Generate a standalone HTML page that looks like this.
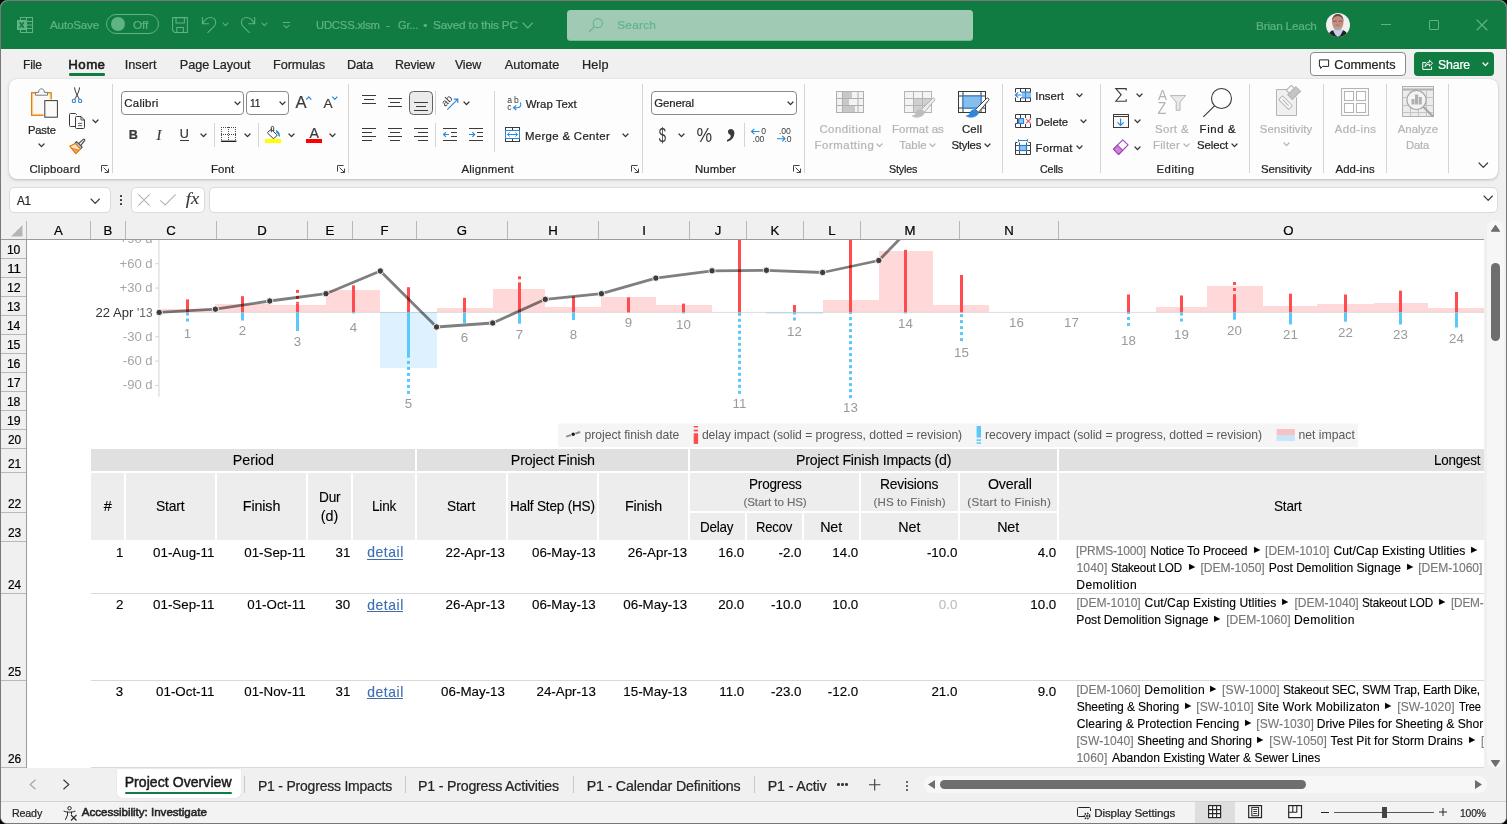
<!DOCTYPE html>
<html lang="en"><head><meta charset="utf-8"><title>UDCSS.xlsm - Excel</title>
<style>
*{box-sizing:border-box;margin:0;padding:0}
html,body{width:1507px;height:824px;overflow:hidden;background:#f0f0f0}
body{position:relative;font-family:"Liberation Sans",sans-serif;font-size:12px;color:#242424}
#app{position:absolute;left:0;top:0;width:1507px;height:824px;will-change:transform}
.t{position:absolute;white-space:nowrap;-webkit-text-stroke:0.22px currentColor}
.tb .t{-webkit-text-stroke:0.12px currentColor}
.a{position:absolute}
svg{position:absolute;overflow:visible}
.sep{position:absolute;width:1px;background:#d4d4d4}
.hc{position:absolute;background:#ededed}
</style></head>
<body>
<div id="app">
<div class="a" style="left:0;top:0;width:1507px;height:824px;background:#060606"></div>
<div class="a" style="left:0;top:0;width:1507px;height:824px;background:#f0f0f0;border-radius:7px;border:1px solid #7c787a;"></div>
<div class="a" style="left:1px;top:1px;width:1505px;height:47.5px;background:#107c41;border-radius:6px 6px 0 0"></div>
<svg style="left:17.00px;top:17.00px" width="16" height="16"><rect x="3.5" y="0.5" width="12" height="15" fill="none" stroke="#5fb384" stroke-width="1"/><path d="M9.5 0.5V15.5M9.5 4.5H15.5M9.5 8H15.5M9.5 11.5H15.5M3.5 3.5H9.5M3.5 12.5H9.5" stroke="#5fb384" stroke-width="1" fill="none"/><rect x="0" y="3" width="9.3" height="10" fill="#5fb384"/><path d="M2.6 5.3L6.8 10.7M6.8 5.3L2.6 10.7" stroke="#107c41" stroke-width="1.5" fill="none"/></svg>
<div class="t" style="left:49.70px;top:15.20px;height:20px;line-height:20px;font-size:11.8px;color:#5fb384;letter-spacing:-0.2px;transform:scaleX(0.9894);transform-origin:0 50%;">AutoSave</div>
<div class="a" style="left:106px;top:14.4px;width:53px;height:19.6px;border:1px solid #5fb384;border-radius:10px"></div>
<div class="a" style="left:111px;top:17.2px;width:14px;height:14px;border-radius:7px;background:#5fb384"></div>
<div class="t" style="left:132.97px;top:15.20px;height:20px;line-height:20px;font-size:11.8px;color:#5fb384;letter-spacing:-0.072px;">Off</div>
<svg style="left:171px;top:16px" width="18" height="18" viewBox="171 16 18 18"><path d="M172.6 17.6H187.4V32.4H174.6L172.6 30.4Z" fill="none" stroke="#5fb384" stroke-width="1.05" stroke-linejoin="round"/><path d="M176 17.6V23H184.4V17.6M176.8 32.4V27.4H183.4V32.4" fill="none" stroke="#5fb384" stroke-width="1.05"/></svg>
<svg style="left:200px;top:15px" width="18" height="20" viewBox="200 15 18 20"><path d="M202.4 17.1V23.7H208.9M202.8 23.3C204.6 19.6 207.6 17.4 210.6 17.4C213.6 17.4 215.7 19.6 215.7 22.6C215.7 24.5 214.8 25.8 213.4 27.2L207.5 32.9" fill="none" stroke="#5fb384" stroke-width="1.05" stroke-linejoin="miter"/></svg>
<svg style="left:223.00px;top:23.05px" width="5" height="2.7"><path d="M0 0L2.5 2.7L5 0" fill="none" stroke="#5fb384" stroke-width="1.1" stroke-linecap="round" stroke-linejoin="round"/></svg>
<svg style="left:239px;top:15px" width="18" height="20" viewBox="239 15 18 20"><path d="M254.7 17.1V23.7H248.2M254.3 23.3C252.5 19.6 249.5 17.4 246.5 17.4C243.5 17.4 241.4 19.6 241.4 22.6C241.4 24.5 242.3 25.8 243.7 27.2L249.6 32.9" fill="none" stroke="#5fb384" stroke-width="1.05" stroke-linejoin="miter"/></svg>
<svg style="left:262.00px;top:23.05px" width="5" height="2.7"><path d="M0 0L2.5 2.7L5 0" fill="none" stroke="#5fb384" stroke-width="1.1" stroke-linecap="round" stroke-linejoin="round"/></svg>
<svg style="left:281px;top:20px" width="11" height="10" viewBox="281 20 11 10"><path d="M283 22.4H290M283.6 25.2L286.5 27.7L289.4 25.2" fill="none" stroke="#5fb384" stroke-width="1.05"/></svg>
<div class="t" style="left:316.06px;top:15.20px;height:20px;line-height:20px;font-size:11.8px;color:#5fb384;letter-spacing:-0.2px;transform:scaleX(0.9541);transform-origin:0 50%;">UDCSS.xlsm</div>
<div class="t" style="left:386.02px;top:15.20px;height:20px;line-height:20px;font-size:11.8px;color:#5fb384;">-</div>
<div class="t" style="left:397.54px;top:15.20px;height:20px;line-height:20px;font-size:11.8px;color:#5fb384;letter-spacing:-0.2px;transform:scaleX(0.9449);transform-origin:0 50%;">Gr...</div>
<div class="t" style="left:423.19px;top:15.40px;height:20px;line-height:20px;font-size:11.8px;color:#5fb384;">•</div>
<div class="t" style="left:432.97px;top:15.20px;height:20px;line-height:20px;font-size:11.8px;color:#5fb384;letter-spacing:-0.187px;">Saved to this PC</div>
<svg style="left:522.95px;top:23.00px" width="9.5" height="5"><path d="M0 0L4.75 5L9.5 0" fill="none" stroke="#5fb384" stroke-width="1.1" stroke-linecap="round" stroke-linejoin="round"/></svg>
<div class="a" style="left:567.2px;top:9.5px;width:405.8px;height:31.3px;background:#a0cab4;border-radius:3.5px;border-bottom:1px solid #6fbd93"></div>
<svg style="left:588.70px;top:18.00px" width="14" height="14"><circle cx="8.8" cy="5.2" r="4.6" fill="none" stroke="#62b487" stroke-width="1.1"/><path d="M5.5 8.5L0.5 13.5" stroke="#62b487" stroke-width="1.1" stroke-linecap="round"/></svg>
<div class="t" style="left:617.17px;top:15.20px;height:20px;line-height:20px;font-size:11.8px;color:#62b487;letter-spacing:0.270px;">Search</div>
<div class="t" style="left:1255.96px;top:15.60px;height:20px;line-height:20px;font-size:11.8px;color:#5fb384;letter-spacing:-0.2px;transform:scaleX(0.9993);transform-origin:0 50%;">Brian Leach</div>
<svg style="left:1326.20px;top:13.00px" width="24" height="24"><defs><clipPath id="avc"><circle cx="12" cy="12" r="12"/></clipPath></defs><g clip-path="url(#avc)"><rect width="24" height="24" fill="#f1eff0"/><path d="M2 24C2.5 19.5 5 17.6 8 17L12 19L16 17C19 17.6 21.5 19.5 22 24Z" fill="#222226"/><path d="M7 17.4L9.2 15.5H14.8L17 17.4L14.6 22L12 24L9.4 22Z" fill="#c3d0ea"/><ellipse cx="11.8" cy="9.2" rx="5.7" ry="8" fill="#c58e7c"/><path d="M6.1 8.6C5.8 3.6 8.6 1 11.8 1S17.8 3.6 17.5 8.6C16.8 5 15 2.9 11.8 2.9S6.8 5 6.1 8.6Z" fill="#6e4a40"/><path d="M6.8 8.2H10.8M12.8 8.2H16.8" stroke="#8a6f70" stroke-width="1.5"/><path d="M10 11.8Q11.8 12.8 13.6 11.8" stroke="#b0706a" stroke-width="0.9" fill="none"/><path d="M7 12.2Q8 14.2 11.8 14.4Q15.6 14.2 16.6 12.2Q16.6 16.6 11.8 17.3Q7 16.6 7 12.2Z" fill="#b3a59d"/></g></svg>
<div class="a" style="left:1381px;top:23.9px;width:10px;height:1px;background:#5fb384"></div>
<div class="a" style="left:1429px;top:20px;width:10px;height:10px;border:1px solid #5fb384;border-radius:1px"></div>
<svg style="left:1477.00px;top:20.00px" width="10" height="10"><path d="M0 0L10 10M10 0L0 10" stroke="#5fb384" stroke-width="1.15" stroke-linecap="round" fill="none"/></svg>
<div class="t" style="left:22.73px;top:54.60px;height:20px;line-height:20px;font-size:12.7px;color:#242424;letter-spacing:-0.2px;transform:scaleX(0.9584);transform-origin:0 50%;">File</div>
<div class="t" style="left:124.66px;top:54.60px;height:20px;line-height:20px;font-size:12.7px;color:#242424;letter-spacing:0.051px;">Insert</div>
<div class="t" style="left:179.78px;top:54.60px;height:20px;line-height:20px;font-size:12.7px;color:#242424;letter-spacing:-0.043px;">Page Layout</div>
<div class="t" style="left:273.08px;top:54.60px;height:20px;line-height:20px;font-size:12.7px;color:#242424;letter-spacing:-0.114px;">Formulas</div>
<div class="t" style="left:346.88px;top:54.60px;height:20px;line-height:20px;font-size:12.7px;color:#242424;letter-spacing:-0.160px;">Data</div>
<div class="t" style="left:394.81px;top:54.60px;height:20px;line-height:20px;font-size:12.7px;color:#242424;letter-spacing:-0.2px;transform:scaleX(0.9788);transform-origin:0 50%;">Review</div>
<div class="t" style="left:455.44px;top:54.60px;height:20px;line-height:20px;font-size:12.7px;color:#242424;letter-spacing:-0.2px;transform:scaleX(0.9797);transform-origin:0 50%;">View</div>
<div class="t" style="left:504.70px;top:54.60px;height:20px;line-height:20px;font-size:12.7px;color:#242424;letter-spacing:0.045px;">Automate</div>
<div class="t" style="left:581.88px;top:54.60px;height:20px;line-height:20px;font-size:12.7px;color:#242424;letter-spacing:0.175px;">Help</div>
<div class="t" style="left:68.34px;top:54.60px;height:20px;line-height:20px;font-size:13.3px;color:#1b1b1b;letter-spacing:0.406px;-webkit-text-stroke:0.6px #1b1b1b;">Home</div>
<div class="a" style="left:68.6px;top:73.4px;width:36.6px;height:2.4px;background:#107c41;border-radius:1.2px"></div>
<div class="a" style="left:1310.3px;top:52px;width:95.3px;height:24px;background:#fff;border:1px solid #8a8a8a;border-radius:4px"></div>
<svg style="left:1317px;top:58px" width="14" height="12" viewBox="1317 58 14 12"><path d="M1319.4 59.9H1328.6V66.4H1322.6L1320.6 68.5V66.4H1319.4Z" fill="none" stroke="#242424" stroke-width="1" stroke-linejoin="round"/></svg>
<div class="t" style="left:1334.37px;top:55.00px;height:20px;line-height:20px;font-size:12.7px;color:#242424;letter-spacing:-0.032px;">Comments</div>
<div class="a" style="left:1414px;top:52px;width:80px;height:24px;background:#107c41;border-radius:4px"></div>
<svg style="left:1421px;top:57px" width="14" height="14" viewBox="1421 57 14 14"><path d="M1426 62.6H1422.8V69.4H1431.6V66.6" fill="none" stroke="#fff" stroke-width="1"/><path d="M1425 66.6C1425.4 63.6 1427.2 62.2 1429.4 62.2V60.2L1432.6 63.2L1429.4 66.2V64.2C1427.6 64.2 1426.2 64.8 1425 66.6Z" fill="none" stroke="#fff" stroke-width="0.95" stroke-linejoin="round"/></svg>
<div class="t" style="left:1438.34px;top:55.00px;height:20px;line-height:20px;font-size:12.7px;color:#fff;letter-spacing:-0.2px;transform:scaleX(0.9748);transform-origin:0 50%;">Share</div>
<svg style="left:1482.90px;top:63.30px" width="4.8" height="2.6"><path d="M0 0L2.4 2.6L4.8 0" fill="none" stroke="#fff" stroke-width="1.3" stroke-linecap="round" stroke-linejoin="round"/></svg>
<div class="a" style="left:9px;top:79px;width:1489px;height:100px;background:#fdfdfd;border-radius:8px;box-shadow:0 1px 3px rgba(0,0,0,0.22), 0 0 1px rgba(0,0,0,0.12)"></div>
<div class="sep" style="left:112.00px;top:84px;height:89px"></div>
<div class="sep" style="left:348.20px;top:84px;height:89px"></div>
<div class="sep" style="left:642.00px;top:84px;height:89px"></div>
<div class="sep" style="left:804.10px;top:84px;height:89px"></div>
<div class="sep" style="left:1002.10px;top:84px;height:89px"></div>
<div class="sep" style="left:1099.90px;top:84px;height:89px"></div>
<div class="sep" style="left:1249.00px;top:84px;height:89px"></div>
<div class="sep" style="left:1323.00px;top:84px;height:89px"></div>
<div class="sep" style="left:1386.00px;top:84px;height:89px"></div>
<div class="sep" style="left:1448.00px;top:84px;height:89px"></div>
<div class="t" style="left:29.43px;top:159.30px;height:20px;line-height:20px;font-size:11.4px;color:#242424;letter-spacing:0.227px;">Clipboard</div>
<div class="t" style="left:210.89px;top:159.30px;height:20px;line-height:20px;font-size:11.4px;color:#242424;letter-spacing:0.156px;">Font</div>
<div class="t" style="left:461.50px;top:159.30px;height:20px;line-height:20px;font-size:11.4px;color:#242424;letter-spacing:0.186px;">Alignment</div>
<div class="t" style="left:695.09px;top:159.30px;height:20px;line-height:20px;font-size:11.4px;color:#242424;letter-spacing:0.031px;">Number</div>
<div class="t" style="left:889.02px;top:159.30px;height:20px;line-height:20px;font-size:11.4px;color:#242424;letter-spacing:-0.2px;transform:scaleX(0.9433);transform-origin:0 50%;">Styles</div>
<div class="t" style="left:1040.36px;top:159.30px;height:20px;line-height:20px;font-size:11.4px;color:#242424;letter-spacing:-0.2px;transform:scaleX(0.9451);transform-origin:0 50%;">Cells</div>
<div class="t" style="left:1156.59px;top:159.30px;height:20px;line-height:20px;font-size:11.4px;color:#242424;letter-spacing:0.438px;">Editing</div>
<div class="t" style="left:1260.99px;top:159.30px;height:20px;line-height:20px;font-size:11.4px;color:#242424;letter-spacing:-0.049px;">Sensitivity</div>
<div class="t" style="left:1335.50px;top:159.30px;height:20px;line-height:20px;font-size:11.4px;color:#242424;letter-spacing:0.075px;">Add-ins</div>
<svg style="left:100.80px;top:164.90px" width="8" height="8"><path d="M0.5 6.6V0.5H6.6M2.6 2.6L7.5 7.5M3.6 7.5H7.5V3.6" fill="none" stroke="#444" stroke-width="1"/></svg>
<svg style="left:337.00px;top:164.90px" width="8" height="8"><path d="M0.5 6.6V0.5H6.6M2.6 2.6L7.5 7.5M3.6 7.5H7.5V3.6" fill="none" stroke="#444" stroke-width="1"/></svg>
<svg style="left:631.00px;top:164.90px" width="8" height="8"><path d="M0.5 6.6V0.5H6.6M2.6 2.6L7.5 7.5M3.6 7.5H7.5V3.6" fill="none" stroke="#444" stroke-width="1"/></svg>
<svg style="left:792.80px;top:164.90px" width="8" height="8"><path d="M0.5 6.6V0.5H6.6M2.6 2.6L7.5 7.5M3.6 7.5H7.5V3.6" fill="none" stroke="#444" stroke-width="1"/></svg>
<svg style="left:28px;top:86px" width="32" height="34" viewBox="28 86 32 34"><rect x="31.6" y="92.7" width="19.6" height="22.6" fill="#fbe3a8" stroke="#e27a0e" stroke-width="1.2"/><rect x="33.4" y="94.4" width="16" height="19.2" fill="#f9f9f9"/><path d="M35.5 95.2V92.4H38.6C38.6 89.8 40 88.8 41.5 88.8C43 88.8 44.4 89.8 44.4 92.4H47.5V95.2Z" fill="#f9f9f9" stroke="#7a7a7a" stroke-width="1" stroke-linejoin="round"/><rect x="43.6" y="99.4" width="15" height="19" fill="#fdfdfd"/><rect x="44.8" y="100.6" width="12.6" height="16.6" fill="#fafafa" stroke="#3a3a3a" stroke-width="1"/></svg>
<div class="t" style="left:28.30px;top:120.20px;height:20px;line-height:20px;font-size:11.4px;color:#242424;letter-spacing:-0.2px;transform:scaleX(0.9851);transform-origin:0 50%;">Paste</div>
<svg style="left:38.90px;top:143.85px" width="5" height="2.7"><path d="M0 0L2.5 2.7L5 0" fill="none" stroke="#333" stroke-width="1.25" stroke-linecap="round" stroke-linejoin="round"/></svg>
<svg style="left:70px;top:86px" width="14" height="18" viewBox="70 86 14 18"><path d="M74.5 87.4C75 91 76.5 94.5 79.3 99.2M79.6 87.4C79.1 91 77.6 94.5 74.8 99.2" stroke="#3a3a3a" stroke-width="1" fill="none"/><circle cx="73.9" cy="100.9" r="1.65" fill="none" stroke="#2b88d8" stroke-width="1.1"/><circle cx="80.1" cy="100.9" r="1.65" fill="none" stroke="#2b88d8" stroke-width="1.1"/></svg>
<svg style="left:68px;top:112px" width="18" height="18" viewBox="68 112 18 18"><path d="M75 126.5H70.5A1 1 0 0 1 69.5 125.5V114.5A1 1 0 0 1 70.5 113.5H75.5L76.8 114.8" fill="none" stroke="#3a3a3a" stroke-width="1"/><path d="M76.5 116.5H81L84.5 120V127.5A1 1 0 0 1 83.5 128.5H76.5A1 1 0 0 1 75.5 127.5V117.5A1 1 0 0 1 76.5 116.5Z" fill="#fafafa" stroke="#3a3a3a" stroke-width="1"/><path d="M81 116.5V120H84.5" fill="none" stroke="#3a3a3a" stroke-width="0.9"/><path d="M78 123.4H82.2M78 125.6H82.2" stroke="#3a3a3a" stroke-width="0.8"/></svg>
<svg style="left:93.00px;top:120.25px" width="5" height="2.7"><path d="M0 0L2.5 2.7L5 0" fill="none" stroke="#333" stroke-width="1.25" stroke-linecap="round" stroke-linejoin="round"/></svg>
<svg style="left:68px;top:138px" width="18" height="17" viewBox="68 138 18 17"><path d="M78.6 143.6L83.2 139.4A0.9 0.9 0 0 1 84.6 140.6L80.6 145.6" fill="#fafafa" stroke="#444" stroke-width="1.1"/><path d="M76.6 141.6L82.2 147.2L80.6 148.8L75 143.2Z" fill="#d8d8d8" stroke="#444" stroke-width="1.1" stroke-linejoin="round"/><path d="M75.2 143.4L80.6 148.8L75.8 153.6L69.8 146.2Z" fill="#fce6c4" stroke="#e2720f" stroke-width="1.1" stroke-linejoin="round"/><path d="M71.5 148.2L79.2 150.2L75.8 153.6Z" fill="#f3a04a" stroke="#e2720f" stroke-width="0.8" stroke-linejoin="round"/></svg>
<div class="a" style="left:121.3px;top:91px;width:122.4px;height:23.6px;background:#fff;border:1px solid #8a8a8a;border-radius:4px"></div>
<div class="t" style="left:124.23px;top:93.00px;height:20px;line-height:20px;font-size:11.4px;color:#242424;letter-spacing:0.308px;">Calibri</div>
<svg style="left:234.50px;top:102.15px" width="5" height="2.7"><path d="M0 0L2.5 2.7L5 0" fill="none" stroke="#333" stroke-width="1.25" stroke-linecap="round" stroke-linejoin="round"/></svg>
<div class="a" style="left:246.3px;top:91px;width:42.3px;height:23.6px;background:#fff;border:1px solid #8a8a8a;border-radius:4px"></div>
<div class="t" style="left:249.94px;top:93.00px;height:20px;line-height:20px;font-size:11.4px;color:#242424;letter-spacing:-0.2px;transform:scaleX(0.8895);transform-origin:0 50%;">11</div>
<svg style="left:279.50px;top:102.15px" width="5" height="2.7"><path d="M0 0L2.5 2.7L5 0" fill="none" stroke="#333" stroke-width="1.25" stroke-linecap="round" stroke-linejoin="round"/></svg>
<div class="t" style="left:295.58px;top:92.90px;height:20px;line-height:20px;font-size:16.6px;color:#3a3a3a;">A</div>
<svg style="left:305px;top:94px" width="8" height="8" viewBox="305 94 8 8"><path d="M306.3 99.6L308.8 96.8L311.3 99.6" fill="none" stroke="#2b88d8" stroke-width="1.2"/></svg>
<div class="t" style="left:323.58px;top:93.60px;height:20px;line-height:20px;font-size:13.6px;color:#3a3a3a;">A</div>
<svg style="left:331px;top:94px" width="8" height="8" viewBox="331 94 8 8"><path d="M332.3 96.6L334.8 99.4L337.3 96.6" fill="none" stroke="#2b88d8" stroke-width="1.2"/></svg>
<div class="t" style="left:128.64px;top:124.60px;height:20px;line-height:20px;font-size:12.6px;color:#3a3a3a;font-weight:bold;">B</div>
<div class="t" style="left:156.44px;top:124.60px;height:20px;line-height:20px;font-size:14.6px;color:#3a3a3a;font-style:italic;font-family:'Liberation Serif',serif;">I</div>
<div class="t" style="left:179.86px;top:123.80px;height:20px;line-height:20px;font-size:12.6px;color:#3a3a3a;">U</div>
<div class="a" style="left:180px;top:140.2px;width:9px;height:1px;background:#3a3a3a"></div>
<svg style="left:200.70px;top:133.95px" width="5" height="2.7"><path d="M0 0L2.5 2.7L5 0" fill="none" stroke="#333" stroke-width="1.25" stroke-linecap="round" stroke-linejoin="round"/></svg>
<div class="sep" style="left:213.8px;top:123px;height:24px"></div>
<svg style="left:221px;top:126px" width="16" height="17" viewBox="221 126 16 17"><g fill="#4a4a4a" shape-rendering="crispEdges"><rect x="221" y="127" width="1" height="1"/><rect x="221" y="134" width="1" height="1"/><rect x="223" y="127" width="1" height="1"/><rect x="223" y="134" width="1" height="1"/><rect x="225" y="127" width="1" height="1"/><rect x="225" y="134" width="1" height="1"/><rect x="227" y="127" width="1" height="1"/><rect x="227" y="134" width="1" height="1"/><rect x="229" y="127" width="1" height="1"/><rect x="229" y="134" width="1" height="1"/><rect x="231" y="127" width="1" height="1"/><rect x="231" y="134" width="1" height="1"/><rect x="233" y="127" width="1" height="1"/><rect x="233" y="134" width="1" height="1"/><rect x="235" y="127" width="1" height="1"/><rect x="235" y="134" width="1" height="1"/><rect x="221" y="127" width="1" height="1"/><rect x="228" y="127" width="1" height="1"/><rect x="235" y="127" width="1" height="1"/><rect x="221" y="129" width="1" height="1"/><rect x="228" y="129" width="1" height="1"/><rect x="235" y="129" width="1" height="1"/><rect x="221" y="131" width="1" height="1"/><rect x="228" y="131" width="1" height="1"/><rect x="235" y="131" width="1" height="1"/><rect x="221" y="133" width="1" height="1"/><rect x="228" y="133" width="1" height="1"/><rect x="235" y="133" width="1" height="1"/><rect x="221" y="135" width="1" height="1"/><rect x="228" y="135" width="1" height="1"/><rect x="235" y="135" width="1" height="1"/><rect x="221" y="137" width="1" height="1"/><rect x="228" y="137" width="1" height="1"/><rect x="235" y="137" width="1" height="1"/><rect x="221" y="139" width="1" height="1"/><rect x="228" y="139" width="1" height="1"/><rect x="235" y="139" width="1" height="1"/></g><rect x="221" y="140.6" width="15.4" height="1.4" fill="#222"/></svg>
<svg style="left:245.00px;top:133.95px" width="5" height="2.7"><path d="M0 0L2.5 2.7L5 0" fill="none" stroke="#333" stroke-width="1.25" stroke-linecap="round" stroke-linejoin="round"/></svg>
<div class="sep" style="left:258.2px;top:123px;height:24px"></div>
<svg style="left:266px;top:126px" width="15" height="13" viewBox="266 126 15 13"><path d="M271.2 129.3L276.6 134.6A1 1 0 0 1 276.6 136L274.2 138.1A1 1 0 0 1 272.8 138.1L267.9 133.4A1 1 0 0 1 267.9 132Z" fill="#fafafa" stroke="#3a3a3a" stroke-width="1" stroke-linejoin="round"/><path d="M271.3 132.2V127.6A1.2 1.2 0 0 1 273.7 127.6V131" fill="none" stroke="#3a3a3a" stroke-width="1"/><path d="M276.4 130.6C278.6 131.4 279.6 133.4 279.4 136.4C278.6 134.4 277.8 133.4 276.8 132.8Z" fill="#2b88d8" stroke="#2b88d8" stroke-width="0.9" stroke-linejoin="round"/></svg>
<div class="a" style="left:264.8px;top:139px;width:16px;height:3.8px;background:#ffff00"></div>
<svg style="left:288.80px;top:133.95px" width="5" height="2.7"><path d="M0 0L2.5 2.7L5 0" fill="none" stroke="#333" stroke-width="1.25" stroke-linecap="round" stroke-linejoin="round"/></svg>
<div class="t" style="left:309.53px;top:122.80px;height:20px;line-height:20px;font-size:14.2px;color:#3a3a3a;">A</div>
<div class="a" style="left:305.8px;top:139px;width:16.3px;height:3.8px;background:#ff0000"></div>
<svg style="left:329.80px;top:133.95px" width="5" height="2.7"><path d="M0 0L2.5 2.7L5 0" fill="none" stroke="#333" stroke-width="1.25" stroke-linecap="round" stroke-linejoin="round"/></svg>
<div class="a" style="left:362px;top:95.00px;width:14.00px;height:1px;background:#3a3a3a"></div><div class="a" style="left:364.2px;top:99.00px;width:9.60px;height:1px;background:#3a3a3a"></div><div class="a" style="left:362px;top:103.00px;width:14.00px;height:1px;background:#3a3a3a"></div>
<div class="a" style="left:388px;top:98.00px;width:14.00px;height:1px;background:#3a3a3a"></div><div class="a" style="left:390.2px;top:102.00px;width:9.60px;height:1px;background:#3a3a3a"></div><div class="a" style="left:388px;top:106.00px;width:14.00px;height:1px;background:#3a3a3a"></div>
<div class="a" style="left:409.2px;top:91.2px;width:23.6px;height:23.5px;background:#ebebeb;border:1px solid #616161;border-radius:4.5px"></div>
<div class="a" style="left:414px;top:102.00px;width:14.00px;height:1px;background:#3a3a3a"></div><div class="a" style="left:416.2px;top:106.00px;width:9.60px;height:1px;background:#3a3a3a"></div><div class="a" style="left:414px;top:110.00px;width:14.00px;height:1px;background:#3a3a3a"></div>
<div class="sep" style="left:434.9px;top:91px;height:24px"></div>
<svg style="left:440px;top:92px" width="20" height="20" viewBox="440 92 20 20"><text x="0" y="0" font-size="10" font-family="Liberation Sans, sans-serif" fill="#3a3a3a" transform="translate(445.2 106.9) rotate(-45)">ab</text><path d="M447.3 109.6L457.6 99.3M453.8 99.1H457.8V103.1" fill="none" stroke="#2b88d8" stroke-width="1.15"/></svg>
<svg style="left:463.90px;top:102.05px" width="5" height="2.7"><path d="M0 0L2.5 2.7L5 0" fill="none" stroke="#333" stroke-width="1.25" stroke-linecap="round" stroke-linejoin="round"/></svg>
<div class="sep" style="left:494.1px;top:90.5px;height:61px"></div>
<svg style="left:506px;top:94px" width="17" height="18" viewBox="506 94 17 18"><text x="507.3" y="102.5" font-size="8.6" letter-spacing="1.9" font-family="Liberation Sans, sans-serif" fill="#3a3a3a">ab</text><text x="507.3" y="109.6" font-size="8.6" font-family="Liberation Sans, sans-serif" fill="#3a3a3a">c</text><path d="M520.3 102.4C521.6 104.8 520.6 107.7 517.5 107.7H513.6M516.2 105.4L513.5 107.7L516.2 110" fill="none" stroke="#2b88d8" stroke-width="1.15"/></svg>
<div class="t" style="left:525.74px;top:93.70px;height:20px;line-height:20px;font-size:11.4px;color:#242424;letter-spacing:0.009px;">Wrap Text</div>
<div class="a" style="left:362px;top:128.00px;width:14.00px;height:1px;background:#3a3a3a"></div>
<div class="a" style="left:388px;top:128.00px;width:14.00px;height:1px;background:#3a3a3a"></div>
<div class="a" style="left:414px;top:128.00px;width:14.00px;height:1px;background:#3a3a3a"></div>
<div class="a" style="left:362px;top:132.00px;width:10.00px;height:1px;background:#3a3a3a"></div>
<div class="a" style="left:390px;top:132.00px;width:10.00px;height:1px;background:#3a3a3a"></div>
<div class="a" style="left:418px;top:132.00px;width:10.00px;height:1px;background:#3a3a3a"></div>
<div class="a" style="left:362px;top:136.00px;width:14.00px;height:1px;background:#3a3a3a"></div>
<div class="a" style="left:388px;top:136.00px;width:14.00px;height:1px;background:#3a3a3a"></div>
<div class="a" style="left:414px;top:136.00px;width:14.00px;height:1px;background:#3a3a3a"></div>
<div class="a" style="left:362px;top:140.00px;width:10.00px;height:1px;background:#3a3a3a"></div>
<div class="a" style="left:390px;top:140.00px;width:10.00px;height:1px;background:#3a3a3a"></div>
<div class="a" style="left:418px;top:140.00px;width:10.00px;height:1px;background:#3a3a3a"></div>
<div class="sep" style="left:434.9px;top:123px;height:24px"></div>
<div class="a" style="left:443px;top:128.00px;width:14.00px;height:1px;background:#3a3a3a"></div><div class="a" style="left:451px;top:132.00px;width:6.00px;height:1px;background:#3a3a3a"></div><div class="a" style="left:451px;top:136.00px;width:6.00px;height:1px;background:#3a3a3a"></div><div class="a" style="left:443px;top:140.00px;width:14.00px;height:1px;background:#3a3a3a"></div>
<svg style="left:442px;top:130px" width="9" height="9" viewBox="442 130 9 9"><path d="M449 134.5H443.6M445.9 132.1L443.5 134.5L445.9 136.9" stroke="#2b88d8" stroke-width="1.15" fill="none"/></svg>
<div class="a" style="left:469px;top:128.00px;width:14.00px;height:1px;background:#3a3a3a"></div><div class="a" style="left:477px;top:132.00px;width:6.00px;height:1px;background:#3a3a3a"></div><div class="a" style="left:477px;top:136.00px;width:6.00px;height:1px;background:#3a3a3a"></div><div class="a" style="left:469px;top:140.00px;width:14.00px;height:1px;background:#3a3a3a"></div>
<svg style="left:468px;top:130px" width="9" height="9" viewBox="468 130 9 9"><path d="M469 134.5H474.6M472.3 132.1L474.7 134.5L472.3 136.9" stroke="#2b88d8" stroke-width="1.15" fill="none"/></svg>
<svg style="left:505px;top:127px" width="15" height="15" viewBox="505 127 15 15"><rect x="505.5" y="127.5" width="14" height="14" fill="#fdfdfd" stroke="#3a3a3a" stroke-width="1"/><path d="M512.5 127.5V130.5M512.5 138.5V141.5" stroke="#3a3a3a" stroke-width="1"/><rect x="505.5" y="130.5" width="14" height="8" fill="#fff" stroke="#2b88d8" stroke-width="1"/><path d="M507.6 134.5H517.4M509.6 132.5L507.5 134.5L509.6 136.5M515.4 132.5L517.5 134.5L515.4 136.5" fill="none" stroke="#2b88d8" stroke-width="1"/></svg>
<div class="t" style="left:524.89px;top:125.60px;height:20px;line-height:20px;font-size:11.4px;color:#242424;letter-spacing:0.343px;">Merge &amp; Center</div>
<svg style="left:622.90px;top:133.95px" width="5" height="2.7"><path d="M0 0L2.5 2.7L5 0" fill="none" stroke="#333" stroke-width="1.25" stroke-linecap="round" stroke-linejoin="round"/></svg>
<div class="a" style="left:651.3px;top:91px;width:145.3px;height:23.6px;background:#fff;border:1px solid #8a8a8a;border-radius:4px"></div>
<div class="t" style="left:654.33px;top:93.00px;height:20px;line-height:20px;font-size:11.4px;color:#242424;letter-spacing:-0.136px;">General</div>
<svg style="left:788.00px;top:102.15px" width="5" height="2.7"><path d="M0 0L2.5 2.7L5 0" fill="none" stroke="#333" stroke-width="1.25" stroke-linecap="round" stroke-linejoin="round"/></svg>
<svg style="left:656.20px;top:125.30px" width="13" height="21" viewBox="656.20 125.30 13 21"><text transform="matrix(0.6771 0 0 1.0000 659.068 142.735)" x="0" y="0" fill="#3a3a3a" style="font-size:19.51px;font-family:'Liberation Sans',sans-serif;">$</text></svg>
<svg style="left:679.10px;top:133.95px" width="5" height="2.7"><path d="M0 0L2.5 2.7L5 0" fill="none" stroke="#333" stroke-width="1.25" stroke-linecap="round" stroke-linejoin="round"/></svg>
<svg style="left:693.80px;top:125.20px" width="20" height="20" viewBox="693.80 125.20 20 20"><text transform="matrix(0.8420 0 0 1.0000 696.185 142.696)" x="0" y="0" fill="#3a3a3a" style="font-size:20.86px;font-family:'Liberation Sans',sans-serif;">%</text></svg>
<svg style="left:723.80px;top:127.30px" width="13" height="18" viewBox="723.80 127.30 13 18"><text transform="matrix(0.8952 0 0 1.0000 724.580 157.787)" x="0" y="0" fill="#3a3a3a" style="font-size:41.33px;font-family:'Liberation Serif',serif;font-weight:bold;">’</text></svg>
<div class="sep" style="left:743.9px;top:123px;height:24px"></div>
<svg style="left:750px;top:126px" width="18" height="18" viewBox="750 126 18 18"><path d="M759.6 131.5H751.6M754.4 128.8L751.5 131.5L754.4 134.2" stroke="#2b88d8" stroke-width="1.15" fill="none"/><text x="761.2" y="133.7" font-size="8.6" font-family="Liberation Sans, sans-serif" fill="#3a3a3a">0</text><text x="752.6" y="142" font-size="8.6" font-family="Liberation Sans, sans-serif" fill="#3a3a3a" letter-spacing="-0.1">.00</text></svg>
<svg style="left:776px;top:126px" width="18" height="18" viewBox="776 126 18 18"><text x="779" y="133.7" font-size="8.6" font-family="Liberation Sans, sans-serif" fill="#3a3a3a" letter-spacing="-0.1">.00</text><path d="M777 138.7H785M782.2 136L785.1 138.7L782.2 141.4" stroke="#2b88d8" stroke-width="1.15" fill="none"/><text x="784.4" y="142" font-size="8.6" font-family="Liberation Sans, sans-serif" fill="#3a3a3a" letter-spacing="-0.1">.0</text></svg>
<svg style="left:836.00px;top:91.00px" width="28" height="22"><rect x="0.5" y="0.5" width="27" height="21" fill="#f3f3f3" stroke="#b0b0b0"/><path d="M0.5 7.5H27.5M0.5 14.5H27.5M6.5 0.5V21.5M22 0.5V21.5" stroke="#b0b0b0" fill="none"/><rect x="7" y="1" width="9" height="6" fill="#c8c8c8"/><rect x="7" y="8" width="6" height="6" fill="#c8c8c8"/><rect x="7" y="15" width="12" height="6" fill="#c8c8c8"/></svg>
<div class="t" style="left:819.43px;top:119.00px;height:20px;line-height:20px;font-size:11.4px;color:#b4b4b4;letter-spacing:0.471px;">Conditional</div>
<div class="t" style="left:814.59px;top:134.60px;height:20px;line-height:20px;font-size:11.4px;color:#b4b4b4;letter-spacing:0.529px;">Formatting</div>
<svg style="left:877.30px;top:143.65px" width="5" height="2.7"><path d="M0 0L2.5 2.7L5 0" fill="none" stroke="#b4b4b4" stroke-width="1.25" stroke-linecap="round" stroke-linejoin="round"/></svg>
<svg style="left:903px;top:90px" width="34" height="30" viewBox="903 90 34 30"><rect x="904.5" y="91.5" width="27" height="21" fill="#f4f4f4" stroke="#b4b4b4"/><path d="M904.5 98.5H931.5M904.5 105.5H931.5M913.5 91.5V112.5M922.5 91.5V112.5" stroke="#b4b4b4" fill="none"/><rect x="914" y="99" width="8" height="6" fill="#d0d0d0"/><rect x="914" y="106" width="8" height="6" fill="#d0d0d0"/><rect x="923" y="99" width="8" height="6" fill="#d0d0d0"/><g transform="translate(-54.1 0)"><path d="M986.4 98.6A1.4 1.4 0 0 1 988.6 100.4L978.6 112.2L975.4 109.6Z" fill="#ececec" stroke="#b0b0b0" stroke-width="1" stroke-linejoin="round"/><path d="M975.2 109.6C972.4 109.2 970.6 110.8 970 113C969.6 114.6 968.2 115.6 966 116C969.6 118 975.4 117.6 977.6 114.6C978.6 113.2 978.8 112.4 978.6 112.2Z" fill="#bdbdbd" stroke="#bdbdbd" stroke-width="0.6" stroke-linejoin="round"/></g></svg>
<div class="t" style="left:891.99px;top:119.00px;height:20px;line-height:20px;font-size:11.4px;color:#b4b4b4;letter-spacing:0.064px;">Format as</div>
<div class="t" style="left:899.27px;top:134.60px;height:20px;line-height:20px;font-size:11.4px;color:#b4b4b4;letter-spacing:0.024px;">Table</div>
<svg style="left:929.50px;top:143.65px" width="5" height="2.7"><path d="M0 0L2.5 2.7L5 0" fill="none" stroke="#b4b4b4" stroke-width="1.25" stroke-linecap="round" stroke-linejoin="round"/></svg>
<svg style="left:957px;top:90px" width="34" height="30" viewBox="957 90 34 30"><rect x="958.5" y="91.5" width="27" height="21" fill="#fdfdfd" stroke="#3a3a3a"/><path d="M958.5 96H985.5M958.5 108H985.5M963 91.5V112.5M981 91.5V112.5" stroke="#3a3a3a" fill="none"/><rect x="963" y="96" width="18" height="12" fill="#83beec" stroke="#2b7cd3"/><g transform="translate(0 0)"><path d="M986.4 98.6A1.4 1.4 0 0 1 988.6 100.4L978.6 112.2L975.4 109.6Z" fill="#fdfdfd" stroke="#3a3a3a" stroke-width="1" stroke-linejoin="round"/><path d="M975.2 109.6C972.4 109.2 970.6 110.8 970 113C969.6 114.6 968.2 115.6 966 116C969.6 118 975.4 117.6 977.6 114.6C978.6 113.2 978.8 112.4 978.6 112.2Z" fill="#2b88d8" stroke="#2b88d8" stroke-width="0.6" stroke-linejoin="round"/></g></svg>
<div class="t" style="left:961.93px;top:119.00px;height:20px;line-height:20px;font-size:11.4px;color:#242424;letter-spacing:0.134px;">Cell</div>
<div class="t" style="left:951.39px;top:134.60px;height:20px;line-height:20px;font-size:11.4px;color:#242424;letter-spacing:-0.191px;">Styles</div>
<svg style="left:985.00px;top:143.65px" width="5" height="2.7"><path d="M0 0L2.5 2.7L5 0" fill="none" stroke="#333" stroke-width="1.25" stroke-linecap="round" stroke-linejoin="round"/></svg>
<svg style="left:1014px;top:87px" width="18" height="16" viewBox="1014 87 18 16"><path d="M1015.5 92.5V88.5H1030.5V101.5H1015.5V97.5" fill="none" stroke="#3a3a3a"/><path d="M1020.5 88.5V92M1025.5 88.5V92M1020.5 98V101.5M1025.5 98V101.5" stroke="#3a3a3a" fill="none"/><rect x="1022" y="92.6" width="9" height="4.8" fill="#8fc4ee"/><path d="M1021 92.2H1031M1021 97.8H1031" stroke="#2b7cd3" stroke-width="1.2" fill="none"/><path d="M1025.5 92.5V97.5" stroke="#2b7cd3" stroke-width="0.8" fill="none"/><path d="M1021.6 95H1015.4M1018.2 92.3L1015.3 95L1018.2 97.7" fill="none" stroke="#2b88d8" stroke-width="1.15"/></svg>
<div class="t" style="left:1035.37px;top:85.70px;height:20px;line-height:20px;font-size:11.4px;color:#242424;">Insert</div>
<svg style="left:1077.00px;top:94.25px" width="5" height="2.7"><path d="M0 0L2.5 2.7L5 0" fill="none" stroke="#333" stroke-width="1.25" stroke-linecap="round" stroke-linejoin="round"/></svg>
<svg style="left:1014px;top:113px" width="18" height="16" viewBox="1014 113 18 16"><path d="M1015.5 118.5V114.5H1030.5V118.5M1015.5 123.5V127.5H1030.5V123.5M1015.5 118.5H1017.5V123.5H1015.5" fill="none" stroke="#3a3a3a"/><path d="M1020.5 114.5V118M1025.5 114.5V118M1020.5 124V127.5M1025.5 124V127.5" stroke="#3a3a3a" fill="none"/><rect x="1018.6" y="118.6" width="5" height="4.9" fill="#8fc4ee" stroke="#2b7cd3" stroke-width="1.1"/><path d="M1026 118.8L1030.6 123.4M1030.6 118.8L1026 123.4" fill="none" stroke="#f25555" stroke-width="1.1"/></svg>
<div class="t" style="left:1035.59px;top:111.90px;height:20px;line-height:20px;font-size:11.4px;color:#242424;letter-spacing:-0.084px;">Delete</div>
<svg style="left:1080.90px;top:120.25px" width="5" height="2.7"><path d="M0 0L2.5 2.7L5 0" fill="none" stroke="#333" stroke-width="1.25" stroke-linecap="round" stroke-linejoin="round"/></svg>
<svg style="left:1014px;top:138px" width="18" height="18" viewBox="1014 138 18 18"><path d="M1018.5 140.5H1027.5M1018.5 139.2V141.8M1027.5 139.2V141.8" stroke="#2b88d8" stroke-width="1.1" fill="none"/><path d="M1017.5 142.5H1015.5V154.5H1030.5V142.5H1028.5" fill="none" stroke="#3a3a3a"/><path d="M1015.5 145.5H1030.5M1015.5 150.5H1030.5M1019.5 142.5V154.5M1026.5 142.5V154.5" stroke="#3a3a3a" stroke-width="0.9" fill="none"/><rect x="1019.5" y="145.5" width="7" height="5" fill="#8fc4ee" stroke="#2b7cd3" stroke-width="1.2"/></svg>
<div class="t" style="left:1035.59px;top:137.90px;height:20px;line-height:20px;font-size:11.4px;color:#242424;letter-spacing:0.138px;">Format</div>
<svg style="left:1077.00px;top:146.25px" width="5" height="2.7"><path d="M0 0L2.5 2.7L5 0" fill="none" stroke="#333" stroke-width="1.25" stroke-linecap="round" stroke-linejoin="round"/></svg>
<svg style="left:1115.30px;top:88.30px" width="12" height="14"><path d="M11.2 2.6V0.6H0.8L6.2 6.8L0.8 13.2H11.2V11.2" fill="none" stroke="#3a3a3a" stroke-width="1.1" stroke-linejoin="miter"/></svg>
<svg style="left:1136.80px;top:94.25px" width="5" height="2.7"><path d="M0 0L2.5 2.7L5 0" fill="none" stroke="#333" stroke-width="1.25" stroke-linecap="round" stroke-linejoin="round"/></svg>
<svg style="left:1112px;top:113px" width="18" height="16" viewBox="1112 113 18 16"><rect x="1113.5" y="114.5" width="15" height="13" fill="#fafafa" stroke="#3a3a3a"/><path d="M1113.5 116.5H1128.5" stroke="#3a3a3a"/><path d="M1120.6 118.4V125.2M1117.5 122.3L1120.6 125.4L1123.7 122.3" fill="none" stroke="#2b88d8" stroke-width="1.15"/></svg>
<svg style="left:1135.00px;top:120.45px" width="5" height="2.7"><path d="M0 0L2.5 2.7L5 0" fill="none" stroke="#333" stroke-width="1.25" stroke-linecap="round" stroke-linejoin="round"/></svg>
<svg style="left:1112px;top:138px" width="18" height="18" viewBox="1112 138 18 18"><path d="M1122.7 139.9L1128.1 144.9L1118.5 154.5L1113.5 149.1Z" fill="#fafafa" stroke="#a541b8" stroke-width="1.1" stroke-linejoin="round"/><path d="M1117.4 145.2L1122.6 150.4L1118.5 154.5L1113.5 149.1Z" fill="#c88ad4" stroke="#a541b8" stroke-width="1.1" stroke-linejoin="round"/></svg>
<svg style="left:1135.00px;top:146.65px" width="5" height="2.7"><path d="M0 0L2.5 2.7L5 0" fill="none" stroke="#333" stroke-width="1.25" stroke-linecap="round" stroke-linejoin="round"/></svg>
<svg style="left:1156px;top:88px" width="32" height="28" viewBox="1156 88 32 28"><path d="M1170.4 95.6H1185.6L1180 102V110.3H1176.2V102Z" fill="#ebebeb" stroke="#b4b4b4" stroke-width="1" stroke-linejoin="round"/></svg>
<svg style="left:1154.60px;top:87.20px" width="15" height="16" viewBox="1154.60 87.20 15 16"><text transform="matrix(0.8979 0 0 1.0000 1157.600 100.600)" x="0" y="0" fill="#b4b4b4" style="font-size:15.07px;font-family:'Liberation Sans',sans-serif;">A</text></svg>
<svg style="left:1155.40px;top:100.40px" width="14" height="16" viewBox="1155.40 100.40 14 16"><text transform="matrix(0.9293 0 0 1.0000 1157.964 114.200)" x="0" y="0" fill="#b4b4b4" style="font-size:15.65px;font-family:'Liberation Sans',sans-serif;">Z</text></svg>
<div class="t" style="left:1154.99px;top:119.00px;height:20px;line-height:20px;font-size:11.4px;color:#b4b4b4;letter-spacing:0.370px;">Sort &amp;</div>
<div class="t" style="left:1152.99px;top:134.60px;height:20px;line-height:20px;font-size:11.4px;color:#b4b4b4;letter-spacing:0.295px;">Filter</div>
<svg style="left:1183.50px;top:143.65px" width="5" height="2.7"><path d="M0 0L2.5 2.7L5 0" fill="none" stroke="#b4b4b4" stroke-width="1.25" stroke-linecap="round" stroke-linejoin="round"/></svg>
<svg style="left:1203.00px;top:87.60px" width="29" height="29"><circle cx="18.5" cy="10.5" r="10" fill="none" stroke="#3a3a3a" stroke-width="1.1"/><path d="M11.5 17.8L0.6 28.6" stroke="#3a3a3a" stroke-width="1.1" stroke-linecap="round"/></svg>
<div class="t" style="left:1199.59px;top:119.00px;height:20px;line-height:20px;font-size:11.4px;color:#242424;letter-spacing:0.607px;">Find &amp;</div>
<div class="t" style="left:1196.99px;top:134.60px;height:20px;line-height:20px;font-size:11.4px;color:#242424;letter-spacing:-0.093px;">Select</div>
<svg style="left:1232.00px;top:143.65px" width="5" height="2.7"><path d="M0 0L2.5 2.7L5 0" fill="none" stroke="#333" stroke-width="1.25" stroke-linecap="round" stroke-linejoin="round"/></svg>
<svg style="left:1275.70px;top:85.50px" width="28" height="31"><path d="M0.5 3.5H12.5L20.5 11.5V29.5H0.5Z" fill="#f0f0f0" stroke="#b4b4b4" stroke-linejoin="round"/><g transform="rotate(-45 19 8)"><rect x="13.2" y="3.4" width="11.6" height="6.6" fill="#c4c4c4" stroke="#b4b4b4"/><rect x="15.5" y="-0.8" width="7" height="4.2" fill="#f6f6f6" stroke="#b4b4b4"/></g><g transform="rotate(-45 10 17)"><rect x="7.3" y="9.5" width="5.4" height="14" rx="1" fill="#fafafa" stroke="#b4b4b4"/><path d="M10 12V21" stroke="#b4b4b4"/></g></svg>
<div class="t" style="left:1259.79px;top:119.00px;height:20px;line-height:20px;font-size:11.4px;color:#b4b4b4;letter-spacing:0.121px;">Sensitivity</div>
<svg style="left:1283.80px;top:142.95px" width="5" height="2.7"><path d="M0 0L2.5 2.7L5 0" fill="none" stroke="#b4b4b4" stroke-width="1.25" stroke-linecap="round" stroke-linejoin="round"/></svg>
<svg style="left:1340.80px;top:88.00px" width="28" height="28"><rect x="0.5" y="0.5" width="27" height="27" fill="#fafafa" stroke="#b4b4b4"/><rect x="3.5" y="3.5" width="9" height="9" fill="#fff" stroke="#b4b4b4"/><rect x="15.5" y="3.5" width="9" height="9" fill="#fff" stroke="#b4b4b4"/><rect x="3.5" y="15.5" width="9" height="9" fill="#fff" stroke="#b4b4b4"/><rect x="15.5" y="15.5" width="9" height="9" fill="#fff" stroke="#b4b4b4"/></svg>
<div class="t" style="left:1334.80px;top:118.80px;height:20px;line-height:20px;font-size:11.4px;color:#b4b4b4;letter-spacing:0.425px;">Add-ins</div>
<svg style="left:1401.80px;top:86.00px" width="32" height="32"><rect x="0.5" y="0.5" width="31" height="30" fill="#ececec" stroke="#b0b0b0"/><path d="M0.5 3.5H31.5" stroke="#b0b0b0" stroke-width="2"/><path d="M0.5 11.5H31.5M0.5 19.5H31.5M0.5 26.5H31.5M8.5 2.5V30.5M16.5 2.5V30.5M24.5 2.5V30.5" stroke="#c4c4c4" fill="none"/><circle cx="14.5" cy="14" r="9.6" fill="#f4f4f4" stroke="#a8a8a8" stroke-width="1.2"/><rect x="9.5" y="13" width="3" height="5.5" fill="#b0b0b0"/><rect x="13" y="8.5" width="3.2" height="10" fill="#b0b0b0"/><rect x="16.8" y="11" width="3" height="7.5" fill="#b0b0b0"/><path d="M21.5 21L30.5 30" stroke="#a8a8a8" stroke-width="2.2" stroke-linecap="round"/></svg>
<div class="t" style="left:1397.80px;top:118.80px;height:20px;line-height:20px;font-size:11.4px;color:#b4b4b4;letter-spacing:-0.036px;">Analyze</div>
<div class="t" style="left:1406.00px;top:134.60px;height:20px;line-height:20px;font-size:11.4px;color:#b4b4b4;letter-spacing:-0.2px;transform:scaleX(0.9893);transform-origin:0 50%;">Data</div>
<svg style="left:1479.40px;top:163.40px" width="8.6" height="4.4"><path d="M0 0L4.3 4.4L8.6 0" fill="none" stroke="#3a3a3a" stroke-width="1.2" stroke-linecap="round" stroke-linejoin="round"/></svg>
<div class="a" style="left:8.6px;top:186.7px;width:102px;height:26px;background:#fff;border:1px solid #dadada;border-radius:5px"></div>
<div class="t" style="left:16.50px;top:190.90px;height:20px;line-height:20px;font-size:12.4px;color:#242424;letter-spacing:-0.2px;transform:scaleX(0.9395);transform-origin:0 50%;">A1</div>
<svg style="left:90.70px;top:199.00px" width="8.4" height="4.4"><path d="M0 0L4.2 4.4L8.4 0" fill="none" stroke="#3a3a3a" stroke-width="1.15" stroke-linecap="round" stroke-linejoin="round"/></svg>
<div class="a" style="left:120px;top:195px;width:2px;height:2px;background:#2e2e2e;border-radius:0.4px"></div>
<div class="a" style="left:120px;top:199px;width:2px;height:2px;background:#2e2e2e;border-radius:0.4px"></div>
<div class="a" style="left:120px;top:203px;width:2px;height:2px;background:#2e2e2e;border-radius:0.4px"></div>
<div class="a" style="left:130.6px;top:186.7px;width:74px;height:26px;background:#fff;border:1px solid #dadada;border-radius:5px"></div>
<svg style="left:138.00px;top:194.00px" width="12" height="12"><path d="M0.3 0.3L11.7 11.7M11.7 0.3L0.3 11.7" stroke="#b4b4b4" stroke-width="1.1" fill="none"/></svg>
<svg style="left:160.00px;top:194.00px" width="16" height="12"><path d="M0.3 6.4L5.2 11L15.7 0.3" stroke="#b4b4b4" stroke-width="1.1" fill="none"/></svg>
<svg style="left:182.90px;top:189.60px" width="19" height="20" viewBox="182.90 189.60 19 20"><text transform="matrix(1.1709 0 0 1.0000 185.714 203.788)" x="0" y="0" fill="#3a3a3a" style="font-size:15.87px;font-family:'Liberation Serif',serif;font-style:italic;stroke:#3a3a3a;stroke-width:0.12px;">fx</text></svg>
<div class="a" style="left:208.6px;top:186.7px;width:1289.6px;height:26px;background:#fff;border:1px solid #dadada;border-radius:5px"></div>
<svg style="left:1483.80px;top:196.40px" width="8.4" height="4.4"><path d="M0 0L4.2 4.4L8.4 0" fill="none" stroke="#3a3a3a" stroke-width="1.15" stroke-linecap="round" stroke-linejoin="round"/></svg>
<div class="a" style="left:26px;top:240px;width:1458.3px;height:528.3px;background:#fff"></div>
<div class="a" style="left:1px;top:220px;width:1483.3px;height:19px;background:#f0f0f0"></div>
<div class="a" style="left:1px;top:239px;width:1483.3px;height:1px;background:#9a9a9a"></div>
<svg style="left:11.40px;top:224.60px" width="11.5" height="11.5"><path d="M11.5 0V11.5H0Z" fill="#b5b5b5"/></svg>
<div class="a" style="left:26px;top:221px;width:1px;height:18px;background:#b8b8b8"></div>
<div class="t" style="left:38.5px;top:220.5px;width:40px;text-align:center;height:19px;line-height:19px;font-size:13.2px;color:#000">A</div>
<div class="a" style="left:90px;top:221px;width:1px;height:18px;background:#b8b8b8"></div>
<div class="t" style="left:88.0px;top:220.5px;width:40px;text-align:center;height:19px;line-height:19px;font-size:13.2px;color:#000">B</div>
<div class="a" style="left:125px;top:221px;width:1px;height:18px;background:#b8b8b8"></div>
<div class="t" style="left:151.0px;top:220.5px;width:40px;text-align:center;height:19px;line-height:19px;font-size:13.2px;color:#000">C</div>
<div class="a" style="left:216px;top:221px;width:1px;height:18px;background:#b8b8b8"></div>
<div class="t" style="left:242.0px;top:220.5px;width:40px;text-align:center;height:19px;line-height:19px;font-size:13.2px;color:#000">D</div>
<div class="a" style="left:307px;top:221px;width:1px;height:18px;background:#b8b8b8"></div>
<div class="t" style="left:310.0px;top:220.5px;width:40px;text-align:center;height:19px;line-height:19px;font-size:13.2px;color:#000">E</div>
<div class="a" style="left:352px;top:221px;width:1px;height:18px;background:#b8b8b8"></div>
<div class="t" style="left:364.5px;top:220.5px;width:40px;text-align:center;height:19px;line-height:19px;font-size:13.2px;color:#000">F</div>
<div class="a" style="left:416px;top:221px;width:1px;height:18px;background:#b8b8b8"></div>
<div class="t" style="left:442.0px;top:220.5px;width:40px;text-align:center;height:19px;line-height:19px;font-size:13.2px;color:#000">G</div>
<div class="a" style="left:507px;top:221px;width:1px;height:18px;background:#b8b8b8"></div>
<div class="t" style="left:533.0px;top:220.5px;width:40px;text-align:center;height:19px;line-height:19px;font-size:13.2px;color:#000">H</div>
<div class="a" style="left:598px;top:221px;width:1px;height:18px;background:#b8b8b8"></div>
<div class="t" style="left:624.0px;top:220.5px;width:40px;text-align:center;height:19px;line-height:19px;font-size:13.2px;color:#000">I</div>
<div class="a" style="left:689px;top:221px;width:1px;height:18px;background:#b8b8b8"></div>
<div class="t" style="left:698.0px;top:220.5px;width:40px;text-align:center;height:19px;line-height:19px;font-size:13.2px;color:#000">J</div>
<div class="a" style="left:746px;top:221px;width:1px;height:18px;background:#b8b8b8"></div>
<div class="t" style="left:755.0px;top:220.5px;width:40px;text-align:center;height:19px;line-height:19px;font-size:13.2px;color:#000">K</div>
<div class="a" style="left:803px;top:221px;width:1px;height:18px;background:#b8b8b8"></div>
<div class="t" style="left:812.0px;top:220.5px;width:40px;text-align:center;height:19px;line-height:19px;font-size:13.2px;color:#000">L</div>
<div class="a" style="left:860px;top:221px;width:1px;height:18px;background:#b8b8b8"></div>
<div class="t" style="left:890.0px;top:220.5px;width:40px;text-align:center;height:19px;line-height:19px;font-size:13.2px;color:#000">M</div>
<div class="a" style="left:959px;top:221px;width:1px;height:18px;background:#b8b8b8"></div>
<div class="t" style="left:989.0px;top:220.5px;width:40px;text-align:center;height:19px;line-height:19px;font-size:13.2px;color:#000">N</div>
<div class="a" style="left:1058px;top:221px;width:1px;height:18px;background:#b8b8b8"></div>
<div class="t" style="left:1268.5px;top:220.5px;width:40px;text-align:center;height:19px;line-height:19px;font-size:13.2px;color:#000">O</div>
<div class="a" style="left:1px;top:240px;width:25px;height:528.3px;background:#f0f0f0"></div>
<div class="a" style="left:26px;top:240px;width:1px;height:528.3px;background:#9a9a9a"></div>
<div class="a" style="left:1px;top:258px;width:25px;height:1px;background:#b8b8b8"></div>
<div class="t" style="left:7.29px;top:239.70px;height:20px;line-height:20px;font-size:13.3px;color:#000;letter-spacing:-0.2px;transform:scaleX(0.9160);transform-origin:0 50%;">10</div>
<div class="a" style="left:1px;top:277px;width:25px;height:1px;background:#b8b8b8"></div>
<div class="t" style="left:7.20px;top:258.70px;height:20px;line-height:20px;font-size:13.3px;color:#000;letter-spacing:-0.169px;">11</div>
<div class="a" style="left:1px;top:296px;width:25px;height:1px;background:#b8b8b8"></div>
<div class="t" style="left:7.27px;top:277.70px;height:20px;line-height:20px;font-size:13.3px;color:#000;letter-spacing:-0.2px;transform:scaleX(0.9302);transform-origin:0 50%;">12</div>
<div class="a" style="left:1px;top:315px;width:25px;height:1px;background:#b8b8b8"></div>
<div class="t" style="left:7.28px;top:296.70px;height:20px;line-height:20px;font-size:13.3px;color:#000;letter-spacing:-0.2px;transform:scaleX(0.9207);transform-origin:0 50%;">13</div>
<div class="a" style="left:1px;top:334px;width:25px;height:1px;background:#b8b8b8"></div>
<div class="t" style="left:7.29px;top:315.70px;height:20px;line-height:20px;font-size:13.3px;color:#000;letter-spacing:-0.2px;transform:scaleX(0.9114);transform-origin:0 50%;">14</div>
<div class="a" style="left:1px;top:353px;width:25px;height:1px;background:#b8b8b8"></div>
<div class="t" style="left:7.28px;top:334.70px;height:20px;line-height:20px;font-size:13.3px;color:#000;letter-spacing:-0.2px;transform:scaleX(0.9207);transform-origin:0 50%;">15</div>
<div class="a" style="left:1px;top:372px;width:25px;height:1px;background:#b8b8b8"></div>
<div class="t" style="left:7.28px;top:353.70px;height:20px;line-height:20px;font-size:13.3px;color:#000;letter-spacing:-0.2px;transform:scaleX(0.9207);transform-origin:0 50%;">16</div>
<div class="a" style="left:1px;top:391px;width:25px;height:1px;background:#b8b8b8"></div>
<div class="t" style="left:7.27px;top:372.70px;height:20px;line-height:20px;font-size:13.3px;color:#000;letter-spacing:-0.2px;transform:scaleX(0.9302);transform-origin:0 50%;">17</div>
<div class="a" style="left:1px;top:410px;width:25px;height:1px;background:#b8b8b8"></div>
<div class="t" style="left:7.28px;top:391.70px;height:20px;line-height:20px;font-size:13.3px;color:#000;letter-spacing:-0.2px;transform:scaleX(0.9207);transform-origin:0 50%;">18</div>
<div class="a" style="left:1px;top:429px;width:25px;height:1px;background:#b8b8b8"></div>
<div class="t" style="left:7.28px;top:410.70px;height:20px;line-height:20px;font-size:13.3px;color:#000;letter-spacing:-0.2px;transform:scaleX(0.9254);transform-origin:0 50%;">19</div>
<div class="a" style="left:1px;top:448px;width:25px;height:1px;background:#b8b8b8"></div>
<div class="t" style="left:7.61px;top:429.70px;height:20px;line-height:20px;font-size:13.3px;color:#000;letter-spacing:-0.2px;transform:scaleX(0.8934);transform-origin:0 50%;">20</div>
<div class="a" style="left:1px;top:472px;width:25px;height:1px;background:#b8b8b8"></div>
<div class="t" style="left:7.60px;top:453.70px;height:20px;line-height:20px;font-size:13.3px;color:#000;letter-spacing:-0.2px;transform:scaleX(0.9023);transform-origin:0 50%;">21</div>
<div class="a" style="left:1px;top:512px;width:25px;height:1px;background:#b8b8b8"></div>
<div class="t" style="left:7.60px;top:493.70px;height:20px;line-height:20px;font-size:13.3px;color:#000;letter-spacing:-0.2px;transform:scaleX(0.9068);transform-origin:0 50%;">22</div>
<div class="a" style="left:1px;top:541px;width:25px;height:1px;background:#b8b8b8"></div>
<div class="t" style="left:7.60px;top:522.70px;height:20px;line-height:20px;font-size:13.3px;color:#000;letter-spacing:-0.2px;transform:scaleX(0.8978);transform-origin:0 50%;">23</div>
<div class="a" style="left:1px;top:593px;width:25px;height:1px;background:#b8b8b8"></div>
<div class="t" style="left:7.61px;top:574.70px;height:20px;line-height:20px;font-size:13.3px;color:#000;letter-spacing:-0.2px;transform:scaleX(0.8890);transform-origin:0 50%;">24</div>
<div class="a" style="left:1px;top:680px;width:25px;height:1px;background:#b8b8b8"></div>
<div class="t" style="left:7.60px;top:661.70px;height:20px;line-height:20px;font-size:13.3px;color:#000;letter-spacing:-0.2px;transform:scaleX(0.8978);transform-origin:0 50%;">25</div>
<div class="a" style="left:1px;top:767px;width:25px;height:1px;background:#b8b8b8"></div>
<div class="t" style="left:7.60px;top:748.70px;height:20px;line-height:20px;font-size:13.3px;color:#000;letter-spacing:-0.2px;transform:scaleX(0.8978);transform-origin:0 50%;">26</div>
<div class="a" style="left:1484.3px;top:220px;width:21.7px;height:548.3px;background:#f0f0f0"></div>
<div class="a" style="left:1487px;top:220.3px;width:17.4px;height:548px;background:#f6f6f6;border-radius:8.7px"></div>
<div class="a" style="left:1491.2px;top:263px;width:9px;height:78px;background:#6e6e6e;border-radius:4.5px"></div>
<svg style="left:1491.20px;top:225.00px" width="9" height="6.8"><path d="M4.5 0.6L8.4 6.2H0.6Z" fill="#6e6e6e" stroke="#6e6e6e" stroke-width="1.2" stroke-linejoin="round"/></svg>
<svg style="left:1491.20px;top:759.80px" width="9" height="6.8"><path d="M0.6 0.6H8.4L4.5 6.2Z" fill="#6e6e6e" stroke="#6e6e6e" stroke-width="1.2" stroke-linejoin="round"/></svg>
<svg style="left:26px;top:240px;overflow:hidden" width="1458.3" height="209" viewBox="26 240 1458.3 209" font-family="Liberation Sans, sans-serif">
<rect x="159.20" y="309.20" width="56.19" height="3.20" fill="#ffd9d9" shape-rendering="crispEdges"/>
<rect x="215.39" y="304.30" width="54.38" height="8.10" fill="#ffd9d9" shape-rendering="crispEdges"/>
<rect x="269.77" y="305.10" width="56.19" height="7.30" fill="#ffd9d9" shape-rendering="crispEdges"/>
<rect x="325.96" y="289.70" width="54.38" height="22.70" fill="#ffd9d9" shape-rendering="crispEdges"/>
<rect x="380.34" y="312.40" width="56.19" height="55.80" fill="#ddf2fe" shape-rendering="crispEdges"/>
<rect x="436.53" y="308.30" width="56.19" height="4.10" fill="#ffd9d9" shape-rendering="crispEdges"/>
<rect x="492.72" y="289.00" width="52.57" height="23.40" fill="#ffd9d9" shape-rendering="crispEdges"/>
<rect x="545.28" y="306.80" width="56.19" height="5.60" fill="#ffd9d9" shape-rendering="crispEdges"/>
<rect x="601.47" y="297.30" width="54.38" height="15.10" fill="#ffd9d9" shape-rendering="crispEdges"/>
<rect x="655.85" y="305.00" width="56.19" height="7.40" fill="#ffd9d9" shape-rendering="crispEdges"/>
<rect x="712.04" y="311.60" width="54.38" height="0.80" fill="#ffd9d9" shape-rendering="crispEdges"/>
<rect x="766.42" y="312.40" width="56.19" height="1.80" fill="#ddf2fe" shape-rendering="crispEdges"/>
<rect x="822.61" y="300.30" width="56.19" height="12.10" fill="#ffd9d9" shape-rendering="crispEdges"/>
<rect x="878.80" y="250.60" width="54.38" height="61.80" fill="#ffd9d9" shape-rendering="crispEdges"/>
<rect x="933.18" y="305.00" width="56.19" height="7.40" fill="#ffd9d9" shape-rendering="crispEdges"/>
<rect x="1156.13" y="306.80" width="50.75" height="5.60" fill="#ffd9d9" shape-rendering="crispEdges"/>
<rect x="1206.88" y="285.70" width="56.19" height="26.70" fill="#ffd9d9" shape-rendering="crispEdges"/>
<rect x="1263.07" y="305.80" width="54.38" height="6.60" fill="#ffd9d9" shape-rendering="crispEdges"/>
<rect x="1317.45" y="304.00" width="56.19" height="8.40" fill="#ffd9d9" shape-rendering="crispEdges"/>
<rect x="1373.64" y="302.80" width="54.38" height="9.60" fill="#ffd9d9" shape-rendering="crispEdges"/>
<rect x="1428.02" y="307.60" width="56.19" height="4.80" fill="#ffd9d9" shape-rendering="crispEdges"/>
<path d="M159.2 312.4H1484.3" stroke="#000" stroke-opacity="0.14" stroke-width="1" fill="none"/>
<path d="M158.89999999999998 240V396.8" stroke="#e4e4e4" stroke-width="1.6" fill="none"/>
<path d="M155.4 239.35H158.4" stroke="#cfcfcf" stroke-width="1" fill="none"/>
<text x="152.6" y="243.35" text-anchor="end" font-size="13.1" fill="#a6a6a6">+90 d</text>
<path d="M155.4 263.70H158.4" stroke="#cfcfcf" stroke-width="1" fill="none"/>
<text x="152.6" y="267.70" text-anchor="end" font-size="13.1" fill="#a6a6a6">+60 d</text>
<path d="M155.4 288.05H158.4" stroke="#cfcfcf" stroke-width="1" fill="none"/>
<text x="152.6" y="292.05" text-anchor="end" font-size="13.1" fill="#a6a6a6">+30 d</text>
<path d="M155.4 336.75H158.4" stroke="#cfcfcf" stroke-width="1" fill="none"/>
<text x="152.6" y="340.75" text-anchor="end" font-size="13.1" fill="#a6a6a6">-30 d</text>
<path d="M155.4 361.10H158.4" stroke="#cfcfcf" stroke-width="1" fill="none"/>
<text x="152.6" y="365.10" text-anchor="end" font-size="13.1" fill="#a6a6a6">-60 d</text>
<path d="M155.4 385.45H158.4" stroke="#cfcfcf" stroke-width="1" fill="none"/>
<text x="152.6" y="389.45" text-anchor="end" font-size="13.1" fill="#a6a6a6">-90 d</text>
<text x="152.6" y="316.60" text-anchor="end" font-size="13.1" fill="#333">22 Apr <tspan fill="#666" font-size="12">'13</tspan></text>
<rect x="186" y="299.40" width="3" height="13.00" fill="#ff4d4f"/>
<rect x="186" y="312.40" width="3" height="1.60" fill="#5ac8fa"/>
<rect x="186" y="318.50" width="3" height="3.00" fill="#5ac8fa"/>
<rect x="186" y="314.00" width="3" height="1.50" fill="#5ac8fa"/>
<text x="187.50" y="337.60" text-anchor="middle" font-size="13.3" fill="#9a9a9a">1</text>
<rect x="241" y="296.20" width="3" height="16.20" fill="#ff4d4f"/>
<rect x="241" y="312.40" width="3" height="8.10" fill="#5ac8fa"/>
<text x="242.50" y="334.60" text-anchor="middle" font-size="13.3" fill="#9a9a9a">2</text>
<rect x="296" y="303.50" width="3" height="8.90" fill="#ff4d4f"/>
<rect x="296" y="289.90" width="3" height="3.00" fill="#ff4d4f"/>
<rect x="296" y="295.90" width="3" height="3.00" fill="#ff4d4f"/>
<rect x="296" y="301.90" width="3" height="1.60" fill="#ff4d4f"/>
<rect x="296" y="312.40" width="3" height="18.60" fill="#5ac8fa"/>
<text x="297.50" y="345.60" text-anchor="middle" font-size="13.3" fill="#9a9a9a">3</text>
<rect x="352" y="285.40" width="3" height="27.00" fill="#ff4d4f"/>
<rect x="352" y="312.40" width="3" height="1.00" fill="#5ac8fa"/>
<text x="353.50" y="331.60" text-anchor="middle" font-size="13.3" fill="#9a9a9a">4</text>
<rect x="407" y="287.20" width="3" height="25.20" fill="#ff4d4f"/>
<rect x="407" y="312.40" width="3" height="45.00" fill="#5ac8fa"/>
<rect x="407" y="390.90" width="3" height="3.00" fill="#5ac8fa"/>
<rect x="407" y="384.90" width="3" height="3.00" fill="#5ac8fa"/>
<rect x="407" y="378.90" width="3" height="3.00" fill="#5ac8fa"/>
<rect x="407" y="372.90" width="3" height="3.00" fill="#5ac8fa"/>
<rect x="407" y="366.90" width="3" height="3.00" fill="#5ac8fa"/>
<rect x="407" y="360.90" width="3" height="3.00" fill="#5ac8fa"/>
<rect x="407" y="357.40" width="3" height="0.50" fill="#5ac8fa"/>
<text x="408.50" y="408.10" text-anchor="middle" font-size="13.3" fill="#9a9a9a">5</text>
<rect x="463" y="297.80" width="3" height="14.60" fill="#ff4d4f"/>
<rect x="463" y="312.40" width="3" height="10.80" fill="#5ac8fa"/>
<text x="464.50" y="341.60" text-anchor="middle" font-size="13.3" fill="#9a9a9a">6</text>
<rect x="518" y="282.90" width="3" height="29.50" fill="#ff4d4f"/>
<rect x="518" y="276.30" width="3" height="3.00" fill="#ff4d4f"/>
<rect x="518" y="282.30" width="3" height="0.60" fill="#ff4d4f"/>
<rect x="518" y="312.40" width="3" height="11.30" fill="#5ac8fa"/>
<text x="519.50" y="338.60" text-anchor="middle" font-size="13.3" fill="#9a9a9a">7</text>
<rect x="572" y="296.50" width="3" height="15.90" fill="#ff4d4f"/>
<rect x="572" y="312.40" width="3" height="7.60" fill="#5ac8fa"/>
<text x="573.50" y="338.60" text-anchor="middle" font-size="13.3" fill="#9a9a9a">8</text>
<rect x="627" y="297.30" width="3" height="15.10" fill="#ff4d4f"/>
<text x="628.50" y="326.60" text-anchor="middle" font-size="13.3" fill="#9a9a9a">9</text>
<rect x="682" y="303.60" width="3" height="8.80" fill="#ff4d4f"/>
<rect x="682" y="312.40" width="3" height="1.00" fill="#5ac8fa"/>
<text x="683.50" y="328.60" text-anchor="middle" font-size="13.3" fill="#9a9a9a">10</text>
<rect x="738" y="230.00" width="3" height="82.40" fill="#ff4d4f"/>
<rect x="738" y="390.80" width="3" height="3.00" fill="#5ac8fa"/>
<rect x="738" y="384.80" width="3" height="3.00" fill="#5ac8fa"/>
<rect x="738" y="378.80" width="3" height="3.00" fill="#5ac8fa"/>
<rect x="738" y="372.80" width="3" height="3.00" fill="#5ac8fa"/>
<rect x="738" y="366.80" width="3" height="3.00" fill="#5ac8fa"/>
<rect x="738" y="360.80" width="3" height="3.00" fill="#5ac8fa"/>
<rect x="738" y="354.80" width="3" height="3.00" fill="#5ac8fa"/>
<rect x="738" y="348.80" width="3" height="3.00" fill="#5ac8fa"/>
<rect x="738" y="342.80" width="3" height="3.00" fill="#5ac8fa"/>
<rect x="738" y="336.80" width="3" height="3.00" fill="#5ac8fa"/>
<rect x="738" y="330.80" width="3" height="3.00" fill="#5ac8fa"/>
<rect x="738" y="324.80" width="3" height="3.00" fill="#5ac8fa"/>
<rect x="738" y="318.80" width="3" height="3.00" fill="#5ac8fa"/>
<rect x="738" y="312.80" width="3" height="3.00" fill="#5ac8fa"/>
<text x="739.50" y="408.00" text-anchor="middle" font-size="13.3" fill="#9a9a9a">11</text>
<rect x="793" y="305.00" width="3" height="7.40" fill="#ff4d4f"/>
<rect x="793" y="317.50" width="3" height="3.00" fill="#5ac8fa"/>
<rect x="793" y="312.40" width="3" height="2.10" fill="#5ac8fa"/>
<text x="794.50" y="336.10" text-anchor="middle" font-size="13.3" fill="#9a9a9a">12</text>
<rect x="849" y="230.00" width="3" height="82.40" fill="#ff4d4f"/>
<rect x="849" y="395.10" width="3" height="3.00" fill="#5ac8fa"/>
<rect x="849" y="389.10" width="3" height="3.00" fill="#5ac8fa"/>
<rect x="849" y="383.10" width="3" height="3.00" fill="#5ac8fa"/>
<rect x="849" y="377.10" width="3" height="3.00" fill="#5ac8fa"/>
<rect x="849" y="371.10" width="3" height="3.00" fill="#5ac8fa"/>
<rect x="849" y="365.10" width="3" height="3.00" fill="#5ac8fa"/>
<rect x="849" y="359.10" width="3" height="3.00" fill="#5ac8fa"/>
<rect x="849" y="353.10" width="3" height="3.00" fill="#5ac8fa"/>
<rect x="849" y="347.10" width="3" height="3.00" fill="#5ac8fa"/>
<rect x="849" y="341.10" width="3" height="3.00" fill="#5ac8fa"/>
<rect x="849" y="335.10" width="3" height="3.00" fill="#5ac8fa"/>
<rect x="849" y="329.10" width="3" height="3.00" fill="#5ac8fa"/>
<rect x="849" y="323.10" width="3" height="3.00" fill="#5ac8fa"/>
<rect x="849" y="317.10" width="3" height="3.00" fill="#5ac8fa"/>
<rect x="849" y="312.40" width="3" height="1.70" fill="#5ac8fa"/>
<text x="850.50" y="412.00" text-anchor="middle" font-size="13.3" fill="#9a9a9a">13</text>
<rect x="904" y="249.90" width="3" height="62.50" fill="#ff4d4f"/>
<rect x="904" y="312.40" width="3" height="1.00" fill="#5ac8fa"/>
<text x="905.50" y="328.40" text-anchor="middle" font-size="13.3" fill="#9a9a9a">14</text>
<rect x="960" y="275.00" width="3" height="37.40" fill="#ff4d4f"/>
<rect x="960" y="338.10" width="3" height="3.00" fill="#5ac8fa"/>
<rect x="960" y="332.10" width="3" height="3.00" fill="#5ac8fa"/>
<rect x="960" y="326.10" width="3" height="3.00" fill="#5ac8fa"/>
<rect x="960" y="320.10" width="3" height="3.00" fill="#5ac8fa"/>
<rect x="960" y="314.10" width="3" height="3.00" fill="#5ac8fa"/>
<text x="961.50" y="356.60" text-anchor="middle" font-size="13.3" fill="#9a9a9a">15</text>
<text x="1016.50" y="327.30" text-anchor="middle" font-size="13.3" fill="#9a9a9a">16</text>
<text x="1071.50" y="327.30" text-anchor="middle" font-size="13.3" fill="#9a9a9a">17</text>
<rect x="1127" y="294.50" width="3" height="17.90" fill="#ff4d4f"/>
<rect x="1127" y="323.00" width="3" height="3.00" fill="#5ac8fa"/>
<rect x="1127" y="317.00" width="3" height="3.00" fill="#5ac8fa"/>
<rect x="1127" y="312.40" width="3" height="1.60" fill="#5ac8fa"/>
<text x="1128.50" y="345.20" text-anchor="middle" font-size="13.3" fill="#9a9a9a">18</text>
<rect x="1180" y="295.50" width="3" height="16.90" fill="#ff4d4f"/>
<rect x="1180" y="318.50" width="3" height="3.00" fill="#5ac8fa"/>
<rect x="1180" y="312.50" width="3" height="3.00" fill="#5ac8fa"/>
<text x="1181.50" y="339.20" text-anchor="middle" font-size="13.3" fill="#9a9a9a">19</text>
<rect x="1233" y="294.50" width="3" height="17.90" fill="#ff4d4f"/>
<rect x="1233" y="282.00" width="3" height="3.00" fill="#ff4d4f"/>
<rect x="1233" y="288.00" width="3" height="3.00" fill="#ff4d4f"/>
<rect x="1233" y="294.00" width="3" height="0.50" fill="#ff4d4f"/>
<rect x="1233" y="312.40" width="3" height="7.30" fill="#5ac8fa"/>
<text x="1234.50" y="335.10" text-anchor="middle" font-size="13.3" fill="#9a9a9a">20</text>
<rect x="1289" y="293.70" width="3" height="18.70" fill="#ff4d4f"/>
<rect x="1289" y="312.40" width="3" height="12.10" fill="#5ac8fa"/>
<text x="1290.50" y="339.20" text-anchor="middle" font-size="13.3" fill="#9a9a9a">21</text>
<rect x="1344" y="294.50" width="3" height="17.90" fill="#ff4d4f"/>
<rect x="1344" y="312.40" width="3" height="9.30" fill="#5ac8fa"/>
<text x="1345.50" y="337.40" text-anchor="middle" font-size="13.3" fill="#9a9a9a">22</text>
<rect x="1399" y="290.70" width="3" height="21.70" fill="#ff4d4f"/>
<rect x="1399" y="312.40" width="3" height="12.10" fill="#5ac8fa"/>
<text x="1400.50" y="339.20" text-anchor="middle" font-size="13.3" fill="#9a9a9a">23</text>
<rect x="1455" y="292.00" width="3" height="20.40" fill="#ff4d4f"/>
<rect x="1455" y="312.40" width="3" height="15.10" fill="#5ac8fa"/>
<text x="1456.50" y="343.20" text-anchor="middle" font-size="13.3" fill="#9a9a9a">24</text>
<polyline points="159.20,312.40 215.39,309.20 269.77,301.00 325.96,293.70 380.34,271.00 436.53,327.00 492.72,323.00 545.28,299.30 601.47,293.70 655.85,278.10 712.04,270.80 766.42,270.30 822.61,272.50 878.80,260.50 933.18,204.50" fill="none" stroke="#000" stroke-opacity="0.5" stroke-width="2.8" stroke-linejoin="round"/>
<circle cx="159.20" cy="312.40" r="3.2" fill="#3d3d3d" stroke="#fff" stroke-width="0.9"/>
<circle cx="215.39" cy="309.20" r="3.2" fill="#3d3d3d" stroke="#fff" stroke-width="0.9"/>
<circle cx="269.77" cy="301.00" r="3.2" fill="#3d3d3d" stroke="#fff" stroke-width="0.9"/>
<circle cx="325.96" cy="293.70" r="3.2" fill="#3d3d3d" stroke="#fff" stroke-width="0.9"/>
<circle cx="380.34" cy="271.00" r="3.2" fill="#3d3d3d" stroke="#fff" stroke-width="0.9"/>
<circle cx="436.53" cy="327.00" r="3.2" fill="#3d3d3d" stroke="#fff" stroke-width="0.9"/>
<circle cx="492.72" cy="323.00" r="3.2" fill="#3d3d3d" stroke="#fff" stroke-width="0.9"/>
<circle cx="545.28" cy="299.30" r="3.2" fill="#3d3d3d" stroke="#fff" stroke-width="0.9"/>
<circle cx="601.47" cy="293.70" r="3.2" fill="#3d3d3d" stroke="#fff" stroke-width="0.9"/>
<circle cx="655.85" cy="278.10" r="3.2" fill="#3d3d3d" stroke="#fff" stroke-width="0.9"/>
<circle cx="712.04" cy="270.80" r="3.2" fill="#3d3d3d" stroke="#fff" stroke-width="0.9"/>
<circle cx="766.42" cy="270.30" r="3.2" fill="#3d3d3d" stroke="#fff" stroke-width="0.9"/>
<circle cx="822.61" cy="272.50" r="3.2" fill="#3d3d3d" stroke="#fff" stroke-width="0.9"/>
<circle cx="878.80" cy="260.50" r="3.2" fill="#3d3d3d" stroke="#fff" stroke-width="0.9"/>
<rect x="558" y="423.5" width="800" height="23.5" fill="#f5f5f5"/>
<path d="M566.2 436.6L580.2 432" stroke="#000" stroke-opacity="0.42" stroke-width="1.9"/><circle cx="573.2" cy="434.3" r="2.4" fill="#f5f5f5"/><circle cx="573.2" cy="434.3" r="1.7" fill="#1a1a1a"/>
<g fill="#ff4d4f"><rect x="693.7" y="426" width="4.4" height="1.5"/><rect x="693.7" y="429.6" width="4.4" height="1.8"/><rect x="693.7" y="433.3" width="4.4" height="10.6"/></g>
<g fill="#5ac8fa"><rect x="976.6" y="426" width="4.4" height="11.6"/><rect x="976.6" y="439.3" width="4.4" height="1.6"/><rect x="976.6" y="442.3" width="4.4" height="1.5"/></g>
<rect x="1276.6" y="429" width="18.2" height="6" fill="#f9c1c1"/><rect x="1276.6" y="435" width="18.2" height="6" fill="#c6e7fa"/>
<text x="584.60" y="439.2" font-size="12.2" letter-spacing="-0.043" fill="#595959">project finish date</text>
<text x="701.90" y="439.2" font-size="12.2" letter-spacing="-0.052" fill="#595959">delay impact (solid = progress, dotted = revision)</text>
<text x="985.00" y="439.2" font-size="12.2" letter-spacing="-0.065" fill="#595959">recovery impact (solid = progress, dotted = revision)</text>
<text x="1298.50" y="439.2" font-size="12.2" letter-spacing="0.012" fill="#595959">net impact</text>
</svg>
<div class="a tb" style="left:26px;top:449px;width:1458.3px;height:319.3px;overflow:hidden">
<div class="a" style="left:-26px;top:-449px;width:1600px;height:824px">
<div class="a" style="left:91px;top:449px;width:324px;height:21.8px;background:#e0e0e0"></div>
<div class="a" style="left:417px;top:449px;width:271.20000000000005px;height:21.8px;background:#e0e0e0"></div>
<div class="a" style="left:690px;top:449px;width:367.20000000000005px;height:21.8px;background:#e0e0e0"></div>
<div class="a" style="left:1059px;top:449px;width:541px;height:21.8px;background:#e0e0e0"></div>
<div class="hc" style="left:91px;top:472.8px;width:33px;height:67.4px"></div>
<div class="hc" style="left:126px;top:472.8px;width:89px;height:67.4px"></div>
<div class="hc" style="left:217px;top:472.8px;width:89px;height:67.4px"></div>
<div class="hc" style="left:308px;top:472.8px;width:43px;height:67.4px"></div>
<div class="hc" style="left:353px;top:472.8px;width:62px;height:67.4px"></div>
<div class="hc" style="left:417px;top:472.8px;width:89px;height:67.4px"></div>
<div class="hc" style="left:508px;top:472.8px;width:89px;height:67.4px"></div>
<div class="hc" style="left:599px;top:472.8px;width:89.20000000000005px;height:67.4px"></div>
<div class="hc" style="left:1059px;top:472.8px;width:541px;height:67.4px"></div>
<div class="hc" style="left:690px;top:472.8px;width:169px;height:38.1px"></div>
<div class="hc" style="left:860.8px;top:472.8px;width:97.20000000000005px;height:38.1px"></div>
<div class="hc" style="left:959.8px;top:472.8px;width:97.40000000000009px;height:38.1px"></div>
<div class="hc" style="left:690px;top:512.9px;width:55px;height:27.3px"></div>
<div class="hc" style="left:747px;top:512.9px;width:55px;height:27.3px"></div>
<div class="hc" style="left:804px;top:512.9px;width:55px;height:27.3px"></div>
<div class="hc" style="left:860.8px;top:512.9px;width:97.20000000000005px;height:27.3px"></div>
<div class="hc" style="left:959.8px;top:512.9px;width:97.40000000000009px;height:27.3px"></div>
<div class="t" style="left:232.66px;top:450.10px;height:20px;line-height:20px;font-size:14.3px;color:#000;letter-spacing:0.009px;">Period</div>
<div class="t" style="left:510.86px;top:450.10px;height:20px;line-height:20px;font-size:14.3px;color:#000;letter-spacing:-0.186px;">Project Finish</div>
<div class="t" style="left:795.87px;top:450.10px;height:20px;line-height:20px;font-size:14.3px;color:#000;letter-spacing:-0.2px;transform:scaleX(0.9898);transform-origin:0 50%;">Project Finish Impacts (d)</div>
<div class="t" style="left:1434.03px;top:450.10px;height:20px;line-height:20px;font-size:14.3px;color:#000;letter-spacing:-0.2px;transform:scaleX(0.9372);transform-origin:0 50%;">Longest Path</div>
<div class="t" style="left:103.83px;top:496.00px;height:20px;line-height:20px;font-size:14.3px;color:#000;">#</div>
<div class="t" style="left:155.77px;top:496.00px;height:20px;line-height:20px;font-size:14.3px;color:#000;letter-spacing:-0.2px;transform:scaleX(0.9736);transform-origin:0 50%;">Start</div>
<div class="t" style="left:242.76px;top:496.00px;height:20px;line-height:20px;font-size:14.3px;color:#000;letter-spacing:-0.107px;">Finish</div>
<div class="t" style="left:319.01px;top:487.00px;height:20px;line-height:20px;font-size:14.3px;color:#000;letter-spacing:-0.2px;transform:scaleX(0.9546);transform-origin:0 50%;">Dur</div>
<div class="t" style="left:320.74px;top:506.40px;height:20px;line-height:20px;font-size:14.3px;color:#000;letter-spacing:0.035px;">(d)</div>
<div class="t" style="left:371.71px;top:496.00px;height:20px;line-height:20px;font-size:14.3px;color:#000;letter-spacing:-0.2px;transform:scaleX(0.9512);transform-origin:0 50%;">Link</div>
<div class="t" style="left:446.98px;top:496.00px;height:20px;line-height:20px;font-size:14.3px;color:#000;letter-spacing:-0.2px;transform:scaleX(0.9596);transform-origin:0 50%;">Start</div>
<div class="t" style="left:509.91px;top:496.00px;height:20px;line-height:20px;font-size:14.3px;color:#000;letter-spacing:-0.2px;transform:scaleX(0.9490);transform-origin:0 50%;">Half Step (HS)</div>
<div class="t" style="left:624.76px;top:496.00px;height:20px;line-height:20px;font-size:14.3px;color:#000;letter-spacing:-0.2px;transform:scaleX(0.9990);transform-origin:0 50%;">Finish</div>
<div class="t" style="left:748.82px;top:473.90px;height:20px;line-height:20px;font-size:14.3px;color:#000;letter-spacing:-0.2px;transform:scaleX(0.9473);transform-origin:0 50%;">Progress</div>
<div class="t" style="left:743.40px;top:492.20px;height:20px;line-height:20px;font-size:11.6px;color:#6a6a6a;letter-spacing:-0.096px;">(Start to HS)</div>
<div class="t" style="left:879.89px;top:473.90px;height:20px;line-height:20px;font-size:14.3px;color:#000;letter-spacing:-0.2px;transform:scaleX(0.9686);transform-origin:0 50%;">Revisions</div>
<div class="t" style="left:873.50px;top:492.20px;height:20px;line-height:20px;font-size:11.6px;color:#6a6a6a;letter-spacing:0.101px;">(HS to Finish)</div>
<div class="t" style="left:987.56px;top:473.90px;height:20px;line-height:20px;font-size:14.3px;color:#000;letter-spacing:-0.2px;transform:scaleX(0.9956);transform-origin:0 50%;">Overall</div>
<div class="t" style="left:967.30px;top:492.20px;height:20px;line-height:20px;font-size:11.6px;color:#6a6a6a;letter-spacing:0.266px;">(Start to Finish)</div>
<div class="t" style="left:700.13px;top:516.90px;height:20px;line-height:20px;font-size:14.3px;color:#000;letter-spacing:-0.2px;transform:scaleX(0.9395);transform-origin:0 50%;">Delay</div>
<div class="t" style="left:755.95px;top:516.90px;height:20px;line-height:20px;font-size:14.3px;color:#000;letter-spacing:-0.2px;transform:scaleX(0.9137);transform-origin:0 50%;">Recov</div>
<div class="t" style="left:820.16px;top:516.90px;height:20px;line-height:20px;font-size:14.3px;color:#000;letter-spacing:-0.110px;">Net</div>
<div class="t" style="left:898.26px;top:516.90px;height:20px;line-height:20px;font-size:14.3px;color:#000;letter-spacing:-0.060px;">Net</div>
<div class="t" style="left:997.16px;top:516.90px;height:20px;line-height:20px;font-size:14.3px;color:#000;letter-spacing:-0.110px;">Net</div>
<div class="t" style="left:1274.39px;top:496.00px;height:20px;line-height:20px;font-size:14.3px;color:#000;letter-spacing:-0.2px;transform:scaleX(0.9456);transform-origin:0 50%;">Start</div>
<div class="t" style="left:115.89px;top:542.90px;height:20px;line-height:20px;font-size:13.35px;color:#000">1</div>
<div class="t" style="left:153.06px;top:542.90px;height:20px;line-height:20px;font-size:13.35px;color:#000">01-Aug-11</div>
<div class="t" style="left:244.26px;top:542.90px;height:20px;line-height:20px;font-size:13.35px;color:#000">01-Sep-11</div>
<div class="t" style="left:335.48px;top:542.90px;height:20px;line-height:20px;font-size:13.35px;color:#000">31</div>
<div class="t" style="left:445.59px;top:542.90px;height:20px;line-height:20px;font-size:13.35px;color:#000">22-Apr-13</div>
<div class="t" style="left:532.02px;top:542.90px;height:20px;line-height:20px;font-size:13.35px;color:#000">06-May-13</div>
<div class="t" style="left:627.79px;top:542.90px;height:20px;line-height:20px;font-size:13.35px;color:#000">26-Apr-13</div>
<div class="t" style="left:718.30px;top:542.90px;height:20px;line-height:20px;font-size:13.35px;color:#000">16.0</div>
<div class="t" style="left:778.51px;top:542.90px;height:20px;line-height:20px;font-size:13.35px;color:#000">-2.0</div>
<div class="t" style="left:832.30px;top:542.90px;height:20px;line-height:20px;font-size:13.35px;color:#000">14.0</div>
<div class="t" style="left:926.93px;top:542.90px;height:20px;line-height:20px;font-size:13.35px;color:#000">-10.0</div>
<div class="t" style="left:1037.71px;top:542.90px;height:20px;line-height:20px;font-size:13.35px;color:#000">4.0</div>
<div class="t" style="left:367.14px;top:542.40px;height:20px;line-height:20px;font-size:13.9px;color:#3d6eb0;letter-spacing:0.608px;">detail</div>
<div class="a" style="left:367px;top:559.30px;width:36px;height:1px;background:#3d6eb0"></div>
<div class="t" style="left:115.96px;top:595.00px;height:20px;line-height:20px;font-size:13.35px;color:#000">2</div>
<div class="t" style="left:153.06px;top:595.00px;height:20px;line-height:20px;font-size:13.35px;color:#000">01-Sep-11</div>
<div class="t" style="left:247.26px;top:595.00px;height:20px;line-height:20px;font-size:13.35px;color:#000">01-Oct-11</div>
<div class="t" style="left:335.35px;top:595.00px;height:20px;line-height:20px;font-size:13.35px;color:#000">30</div>
<div class="t" style="left:445.59px;top:595.00px;height:20px;line-height:20px;font-size:13.35px;color:#000">26-Apr-13</div>
<div class="t" style="left:532.02px;top:595.00px;height:20px;line-height:20px;font-size:13.35px;color:#000">06-May-13</div>
<div class="t" style="left:623.32px;top:595.00px;height:20px;line-height:20px;font-size:13.35px;color:#000">06-May-13</div>
<div class="t" style="left:718.30px;top:595.00px;height:20px;line-height:20px;font-size:13.35px;color:#000">20.0</div>
<div class="t" style="left:771.03px;top:595.00px;height:20px;line-height:20px;font-size:13.35px;color:#000">-10.0</div>
<div class="t" style="left:832.30px;top:595.00px;height:20px;line-height:20px;font-size:13.35px;color:#000">10.0</div>
<div class="t" style="left:938.81px;top:595.00px;height:20px;line-height:20px;font-size:13.35px;color:#bfbfbf">0.0</div>
<div class="t" style="left:1030.30px;top:595.00px;height:20px;line-height:20px;font-size:13.35px;color:#000">10.0</div>
<div class="t" style="left:367.14px;top:594.50px;height:20px;line-height:20px;font-size:13.9px;color:#3d6eb0;letter-spacing:0.608px;">detail</div>
<div class="a" style="left:367px;top:611.40px;width:36px;height:1px;background:#3d6eb0"></div>
<div class="t" style="left:115.82px;top:682.00px;height:20px;line-height:20px;font-size:13.35px;color:#000">3</div>
<div class="t" style="left:156.06px;top:682.00px;height:20px;line-height:20px;font-size:13.35px;color:#000">01-Oct-11</div>
<div class="t" style="left:244.26px;top:682.00px;height:20px;line-height:20px;font-size:13.35px;color:#000">01-Nov-11</div>
<div class="t" style="left:335.48px;top:682.00px;height:20px;line-height:20px;font-size:13.35px;color:#000">31</div>
<div class="t" style="left:441.12px;top:682.00px;height:20px;line-height:20px;font-size:13.35px;color:#000">06-May-13</div>
<div class="t" style="left:536.49px;top:682.00px;height:20px;line-height:20px;font-size:13.35px;color:#000">24-Apr-13</div>
<div class="t" style="left:623.32px;top:682.00px;height:20px;line-height:20px;font-size:13.35px;color:#000">15-May-13</div>
<div class="t" style="left:719.30px;top:682.00px;height:20px;line-height:20px;font-size:13.35px;color:#000">11.0</div>
<div class="t" style="left:771.03px;top:682.00px;height:20px;line-height:20px;font-size:13.35px;color:#000">-23.0</div>
<div class="t" style="left:827.83px;top:682.00px;height:20px;line-height:20px;font-size:13.35px;color:#000">-12.0</div>
<div class="t" style="left:931.40px;top:682.00px;height:20px;line-height:20px;font-size:13.35px;color:#000">21.0</div>
<div class="t" style="left:1037.71px;top:682.00px;height:20px;line-height:20px;font-size:13.35px;color:#000">9.0</div>
<div class="t" style="left:367.14px;top:681.50px;height:20px;line-height:20px;font-size:13.9px;color:#3d6eb0;letter-spacing:0.608px;">detail</div>
<div class="a" style="left:367px;top:698.40px;width:36px;height:1px;background:#3d6eb0"></div>
<div class="a" style="left:91px;top:593px;width:1500px;height:1px;background:#d9d9d9"></div>
<div class="a" style="left:91px;top:680px;width:1500px;height:1px;background:#d9d9d9"></div>
<div class="a" style="left:91px;top:767px;width:1500px;height:1px;background:#d9d9d9"></div>
<div class="t" style="left:1076.46px;top:540.80px;height:20px;line-height:20px;font-size:12.1px;color:#767676;letter-spacing:-0.2px;transform:scaleX(0.9912);transform-origin:0 50%;">[PRMS-1000]</div>
<div class="t" style="left:1150.33px;top:540.80px;height:20px;line-height:20px;font-size:12.1px;color:#000;letter-spacing:-0.098px;">Notice To Proceed</div>
<div class="t" style="left:1253.50px;top:540.00px;height:20px;line-height:20px;font-size:7.8px;color:#000">▶</div>
<div class="t" style="left:1265.05px;top:540.80px;height:20px;line-height:20px;font-size:12.1px;color:#767676;letter-spacing:-0.029px;">[DEM-1010]</div>
<div class="t" style="left:1333.49px;top:540.80px;height:20px;line-height:20px;font-size:12.1px;color:#000;letter-spacing:0.090px;">Cut/Cap Existing Utlities</div>
<div class="t" style="left:1471.20px;top:540.00px;height:20px;line-height:20px;font-size:7.8px;color:#000">▶</div>
<div class="t" style="left:1076.39px;top:557.80px;height:20px;line-height:20px;font-size:12.1px;color:#767676;letter-spacing:0.176px;">1040]</div>
<div class="t" style="left:1111.37px;top:557.80px;height:20px;line-height:20px;font-size:12.1px;color:#000;letter-spacing:-0.2px;transform:scaleX(0.9642);transform-origin:0 50%;">Stakeout LOD</div>
<div class="t" style="left:1188.60px;top:557.00px;height:20px;line-height:20px;font-size:7.8px;color:#000">▶</div>
<div class="t" style="left:1200.45px;top:557.80px;height:20px;line-height:20px;font-size:12.1px;color:#767676;letter-spacing:-0.029px;">[DEM-1050]</div>
<div class="t" style="left:1268.63px;top:557.80px;height:20px;line-height:20px;font-size:12.1px;color:#000;letter-spacing:-0.008px;">Post Demolition Signage</div>
<div class="t" style="left:1406.70px;top:557.00px;height:20px;line-height:20px;font-size:7.8px;color:#000">▶</div>
<div class="t" style="left:1418.25px;top:557.80px;height:20px;line-height:20px;font-size:12.1px;color:#767676;letter-spacing:-0.040px;">[DEM-1060]</div>
<div class="t" style="left:1076.33px;top:575.00px;height:20px;line-height:20px;font-size:12.1px;color:#000;letter-spacing:0.354px;">Demolition</div>
<div class="t" style="left:1076.45px;top:593.00px;height:20px;line-height:20px;font-size:12.1px;color:#767676;letter-spacing:-0.029px;">[DEM-1010]</div>
<div class="t" style="left:1144.60px;top:593.00px;height:20px;line-height:20px;font-size:12.1px;color:#000;letter-spacing:0.086px;">Cut/Cap Existing Utlities</div>
<div class="t" style="left:1282.30px;top:592.20px;height:20px;line-height:20px;font-size:7.8px;color:#000">▶</div>
<div class="t" style="left:1294.45px;top:593.00px;height:20px;line-height:20px;font-size:12.1px;color:#767676;letter-spacing:-0.029px;">[DEM-1040]</div>
<div class="t" style="left:1362.47px;top:593.00px;height:20px;line-height:20px;font-size:12.1px;color:#000;letter-spacing:-0.2px;transform:scaleX(0.9642);transform-origin:0 50%;">Stakeout LOD</div>
<div class="t" style="left:1439.40px;top:592.20px;height:20px;line-height:20px;font-size:7.8px;color:#000">▶</div>
<div class="t" style="left:1450.97px;top:593.00px;height:20px;line-height:20px;font-size:12.1px;color:#767676;letter-spacing:-0.2px;transform:scaleX(0.9747);transform-origin:0 50%;">[DEM-</div>
<div class="t" style="left:1076.33px;top:610.00px;height:20px;line-height:20px;font-size:12.1px;color:#000;letter-spacing:-0.008px;">Post Demolition Signage</div>
<div class="t" style="left:1214.40px;top:609.20px;height:20px;line-height:20px;font-size:7.8px;color:#000">▶</div>
<div class="t" style="left:1226.25px;top:610.00px;height:20px;line-height:20px;font-size:12.1px;color:#767676;letter-spacing:-0.029px;">[DEM-1060]</div>
<div class="t" style="left:1294.03px;top:610.00px;height:20px;line-height:20px;font-size:12.1px;color:#000;letter-spacing:0.365px;">Demolition</div>
<div class="t" style="left:1076.45px;top:680.00px;height:20px;line-height:20px;font-size:12.1px;color:#767676;letter-spacing:-0.029px;">[DEM-1060]</div>
<div class="t" style="left:1144.23px;top:680.00px;height:20px;line-height:20px;font-size:12.1px;color:#000;letter-spacing:0.365px;">Demolition</div>
<div class="t" style="left:1210.40px;top:679.20px;height:20px;line-height:20px;font-size:7.8px;color:#000">▶</div>
<div class="t" style="left:1222.05px;top:680.00px;height:20px;line-height:20px;font-size:12.1px;color:#767676;letter-spacing:0.083px;">[SW-1000]</div>
<div class="t" style="left:1282.96px;top:680.00px;height:20px;line-height:20px;font-size:12.1px;color:#000;letter-spacing:-0.2px;transform:scaleX(0.9881);transform-origin:0 50%;">Stakeout SEC, SWM Trap, Earth Dike,</div>
<div class="t" style="left:1076.76px;top:697.00px;height:20px;line-height:20px;font-size:12.1px;color:#000;letter-spacing:-0.107px;">Sheeting &amp; Shoring</div>
<div class="t" style="left:1184.70px;top:696.20px;height:20px;line-height:20px;font-size:7.8px;color:#000">▶</div>
<div class="t" style="left:1196.25px;top:697.00px;height:20px;line-height:20px;font-size:12.1px;color:#767676;letter-spacing:0.045px;">[SW-1010]</div>
<div class="t" style="left:1257.16px;top:697.00px;height:20px;line-height:20px;font-size:12.1px;color:#000;letter-spacing:0.298px;">Site Work Mobilizaton</div>
<div class="t" style="left:1385.40px;top:696.20px;height:20px;line-height:20px;font-size:7.8px;color:#000">▶</div>
<div class="t" style="left:1397.25px;top:697.00px;height:20px;line-height:20px;font-size:12.1px;color:#767676;letter-spacing:0.045px;">[SW-1020]</div>
<div class="t" style="left:1458.58px;top:697.00px;height:20px;line-height:20px;font-size:12.1px;color:#000;letter-spacing:-0.2px;transform:scaleX(0.9239);transform-origin:0 50%;">Tree</div>
<div class="t" style="left:1076.69px;top:714.00px;height:20px;line-height:20px;font-size:12.1px;color:#000;letter-spacing:0.066px;">Clearing &amp; Protection Fencing</div>
<div class="t" style="left:1244.70px;top:713.20px;height:20px;line-height:20px;font-size:7.8px;color:#000">▶</div>
<div class="t" style="left:1256.25px;top:714.00px;height:20px;line-height:20px;font-size:12.1px;color:#767676;letter-spacing:0.083px;">[SW-1030]</div>
<div class="t" style="left:1316.83px;top:714.00px;height:20px;line-height:20px;font-size:12.1px;color:#000;letter-spacing:-0.012px;">Drive Piles for Sheeting &amp; Shoring</div>
<div class="t" style="left:1076.45px;top:731.00px;height:20px;line-height:20px;font-size:12.1px;color:#767676;letter-spacing:0.045px;">[SW-1040]</div>
<div class="t" style="left:1137.36px;top:731.00px;height:20px;line-height:20px;font-size:12.1px;color:#000;letter-spacing:-0.093px;">Sheeting and Shoring</div>
<div class="t" style="left:1257.40px;top:730.20px;height:20px;line-height:20px;font-size:7.8px;color:#000">▶</div>
<div class="t" style="left:1269.35px;top:731.00px;height:20px;line-height:20px;font-size:12.1px;color:#767676;letter-spacing:0.083px;">[SW-1050]</div>
<div class="t" style="left:1330.56px;top:731.00px;height:20px;line-height:20px;font-size:12.1px;color:#000;letter-spacing:0.053px;">Test Pit for Storm Drains</div>
<div class="t" style="left:1469.10px;top:730.20px;height:20px;line-height:20px;font-size:7.8px;color:#000">▶</div>
<div class="t" style="left:1481.02px;top:731.00px;height:20px;line-height:20px;font-size:12.1px;color:#767676;letter-spacing:-0.2px;transform:scaleX(0.9235);transform-origin:0 50%;">[SW-</div>
<div class="t" style="left:1076.39px;top:748.00px;height:20px;line-height:20px;font-size:12.1px;color:#767676;letter-spacing:0.176px;">1060]</div>
<div class="t" style="left:1111.90px;top:748.00px;height:20px;line-height:20px;font-size:12.1px;color:#000;letter-spacing:-0.063px;">Abandon Existing Water &amp; Sewer Lines</div>
</div></div>
<div class="a" style="left:1px;top:768.3px;width:1505px;height:33.3px;background:#f0f0f0"></div>
<div class="a" style="left:1px;top:801.4px;width:1505px;height:1px;background:#d2d2d2"></div>
<div class="a" style="left:1px;top:802.4px;width:1505px;height:20.6px;background:#f3f3f3;border-radius:0 0 6px 6px"></div>
<svg style="left:29.00px;top:779.00px" width="8" height="11"><path d="M6.5 0.8L1.2 5.5L6.5 10.2" fill="none" stroke="#a6a6a6" stroke-width="1.2"/></svg>
<svg style="left:61.50px;top:779.00px" width="8" height="11"><path d="M1.5 0.8L6.8 5.5L1.5 10.2" fill="none" stroke="#3a3a3a" stroke-width="1.2"/></svg>
<div class="a" style="left:116.5px;top:768.8px;width:124.3px;height:29px;background:#fff;border-radius:0 0 5px 5px;box-shadow:0 0 1px rgba(0,0,0,0.25)"></div>
<div class="t" style="left:124.68px;top:772.40px;height:20px;line-height:20px;font-size:14px;color:#1b1b1b;letter-spacing:0.072px;-webkit-text-stroke:0.5px #1b1b1b;">Project Overview</div>
<div class="a" style="left:125.3px;top:792px;width:106.7px;height:2px;background:#107c41;border-radius:1px"></div>
<div class="a" style="left:244.1px;top:776.4px;width:1px;height:17px;background:#c8c8c8"></div>
<div class="a" style="left:405.2px;top:776.4px;width:1px;height:17px;background:#c8c8c8"></div>
<div class="a" style="left:573.1px;top:776.4px;width:1px;height:17px;background:#c8c8c8"></div>
<div class="a" style="left:753.9px;top:776.4px;width:1px;height:17px;background:#c8c8c8"></div>
<div class="t" style="left:257.78px;top:776.10px;height:20px;line-height:20px;font-size:14.2px;color:#242424;letter-spacing:-0.2px;transform:scaleX(0.9836);transform-origin:0 50%;">P1 - Progress Impacts</div>
<div class="t" style="left:418.37px;top:776.10px;height:20px;line-height:20px;font-size:14.2px;color:#242424;letter-spacing:-0.2px;transform:scaleX(0.9990);transform-origin:0 50%;">P1 - Progress Activities</div>
<div class="t" style="left:586.66px;top:776.10px;height:20px;line-height:20px;font-size:14.2px;color:#242424;letter-spacing:-0.158px;">P1 - Calendar Definitions</div>
<div class="t" style="left:767.76px;top:776.10px;height:20px;line-height:20px;font-size:14.2px;color:#242424;letter-spacing:-0.121px;">P1 - Activ</div>
<div class="a" style="left:837.2px;top:783.3px;width:2.6px;height:2.6px;background:#3a3a3a;border-radius:1.3px"></div>
<div class="a" style="left:841.2px;top:783.3px;width:2.6px;height:2.6px;background:#3a3a3a;border-radius:1.3px"></div>
<div class="a" style="left:845.2px;top:783.3px;width:2.6px;height:2.6px;background:#3a3a3a;border-radius:1.3px"></div>
<svg style="left:869.00px;top:779.00px" width="11.4" height="11.4"><path d="M5.7 0V11.4M0 5.7H11.4" stroke="#3a3a3a" stroke-width="1.1" fill="none"/></svg>
<div class="a" style="left:905.8px;top:781.2px;width:2px;height:2px;background:#3a3a3a;border-radius:1px"></div>
<div class="a" style="left:905.8px;top:785.2px;width:2px;height:2px;background:#3a3a3a;border-radius:1px"></div>
<div class="a" style="left:905.8px;top:789.2px;width:2px;height:2px;background:#3a3a3a;border-radius:1px"></div>
<div class="a" style="left:923.5px;top:776.4px;width:563px;height:16.4px;background:#f7f7f7;border-radius:8px"></div>
<svg style="left:927.80px;top:780.00px" width="7" height="9"><path d="M7 0V9L0 4.5Z" fill="#6e6e6e"/></svg>
<svg style="left:1475.20px;top:780.00px" width="7" height="9"><path d="M0 0V9L7 4.5Z" fill="#6e6e6e"/></svg>
<div class="a" style="left:939.9px;top:779.7px;width:366.1px;height:9.3px;background:#6e6e6e;border-radius:4.65px"></div>
<div class="t" style="left:12.24px;top:803.00px;height:20px;line-height:20px;font-size:11.6px;color:#242424;letter-spacing:-0.2px;transform:scaleX(0.9246);transform-origin:0 50%;">Ready</div>
<svg style="left:62.50px;top:805.50px" width="15" height="15"><circle cx="6.5" cy="2.2" r="1.7" fill="none" stroke="#242424" stroke-width="1"/><path d="M1 5.2C3 6 5 6.2 6.5 6.2S10 6 12 5.2M4.5 6.2V9L2.5 13.5M8.5 6.2V8" fill="none" stroke="#242424" stroke-width="1" stroke-linecap="round"/><path d="M8 9L13.5 14.5M13.5 9L8 14.5" stroke="#242424" stroke-width="1.1"/></svg>
<div class="t" style="left:81.70px;top:801.80px;height:20px;line-height:20px;font-size:11.6px;color:#242424;letter-spacing:-0.019px;-webkit-text-stroke:0.55px #242424;">Accessibility: Investigate</div>
<svg style="left:1077.00px;top:806.50px" width="14" height="13"><path d="M8 9.5H1.5A1 1 0 0 1 0.5 8.5V1.5A1 1 0 0 1 1.5 0.5H12.5A1 1 0 0 1 13.5 1.5V4" fill="none" stroke="#242424" stroke-width="1"/><circle cx="10" cy="9" r="2.6" fill="none" stroke="#242424" stroke-width="1.6" stroke-dasharray="1.4 1"/><circle cx="10" cy="9" r="1" fill="#242424"/></svg>
<div class="t" style="left:1094.27px;top:803.00px;height:20px;line-height:20px;font-size:11.6px;color:#242424;letter-spacing:-0.136px;">Display Settings</div>
<div class="a" style="left:1195.2px;top:802.4px;width:39.7px;height:20.6px;background:#dedede"></div>
<svg style="left:1207px;top:804px" width="16" height="16" viewBox="1207 804 16 16"><rect x="1208.6" y="805.6" width="12" height="12" fill="#fafafa" stroke="#262626" stroke-width="1.2"/><path d="M1208.6 809.6H1220.6M1208.6 813.6H1220.6M1212.6 805.6V817.6M1216.6 805.6V817.6" stroke="#262626" stroke-width="1.1" fill="none"/></svg>
<svg style="left:1247px;top:804px" width="16" height="16" viewBox="1247 804 16 16"><rect x="1248.7" y="805.6" width="12.8" height="12" fill="#fafafa" stroke="#262626" stroke-width="1.2"/><rect x="1251.8" y="807.4" width="6.8" height="8.4" fill="none" stroke="#262626" stroke-width="1"/><path d="M1253.2 809.5H1257.2M1253.2 811.5H1257.2M1253.2 813.5H1257.2" stroke="#262626" stroke-width="0.9"/></svg>
<svg style="left:1287px;top:804px" width="16" height="16" viewBox="1287 804 16 16"><rect x="1288.7" y="805.6" width="12.8" height="12" fill="#fafafa" stroke="#262626" stroke-width="1.2"/><path d="M1288.7 812.2H1296.8V805.6M1292.8 805.6V812.2" stroke="#262626" stroke-width="1.1" fill="none"/></svg>
<div class="a" style="left:1320.6px;top:811.9px;width:8px;height:1px;background:#242424"></div>
<div class="a" style="left:1334.3px;top:811.9px;width:99.7px;height:1px;background:#555"></div>
<div class="a" style="left:1382px;top:806.8px;width:4.6px;height:11px;background:#444"></div>
<svg style="left:1439.00px;top:808.40px" width="8" height="8"><path d="M4 0V8M0 4H8" stroke="#242424" stroke-width="1" fill="none"/></svg>
<div class="t" style="left:1460.32px;top:803.00px;height:20px;line-height:20px;font-size:11.6px;color:#242424;letter-spacing:-0.2px;transform:scaleX(0.8914);transform-origin:0 50%;">100%</div>
</div>
</body></html>
